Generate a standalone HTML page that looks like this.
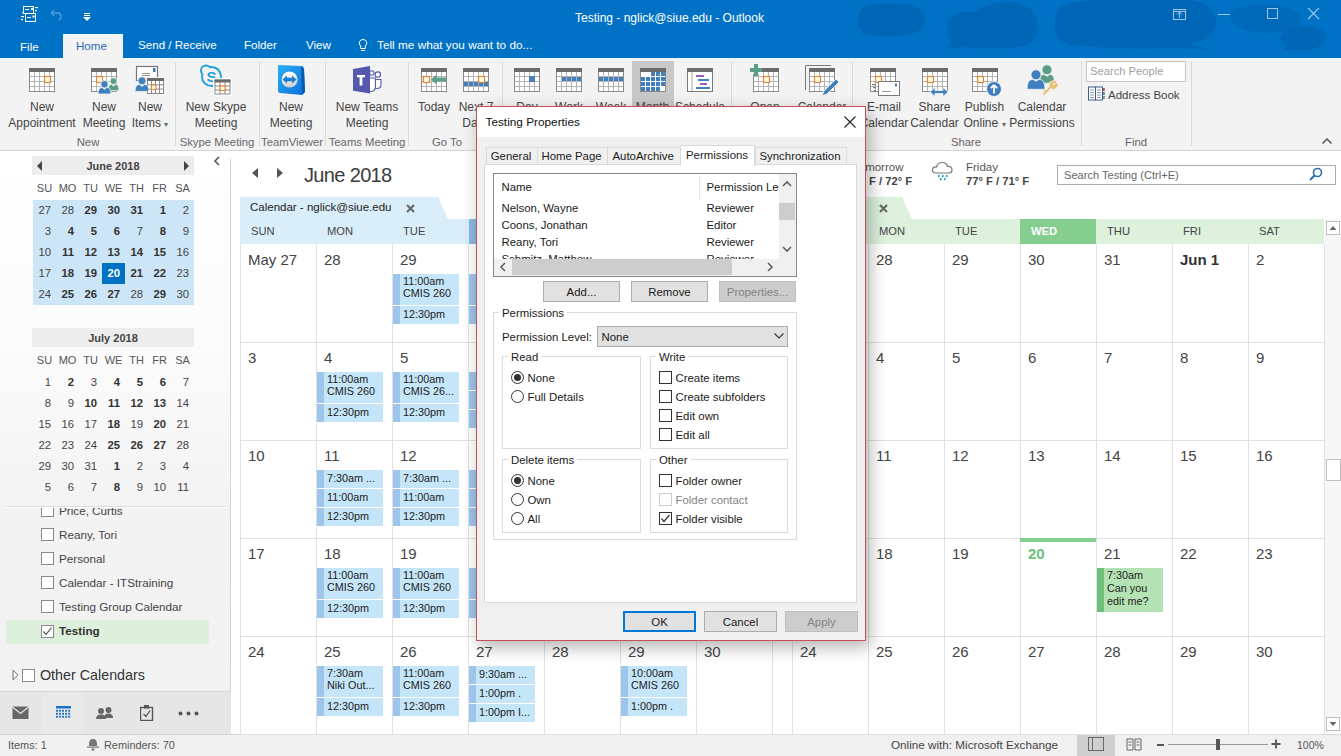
<!DOCTYPE html>
<html><head><meta charset="utf-8"><style>
html,body{margin:0;padding:0;}
body{width:1341px;height:756px;overflow:hidden;position:relative;font-family:"Liberation Sans", sans-serif;background:#fff;}
div{font-family:"Liberation Sans", sans-serif;}
</style></head><body>
<div style="position:absolute;left:0px;top:0px;width:1341px;height:58px;background:#0072C6"></div><svg style="position:absolute;left:850px;top:0px;" width="491" height="50" viewBox="0 0 491 50"><path d="M12 8 Q20 2 40 4 Q60 2 72 10 Q80 20 70 30 Q58 38 36 36 Q22 36 14 34 L10 37 L13 31 Q6 24 8 16 Z" fill="#0067B6"/><path d="M98 20 Q104 10 125 12 Q140 0 165 2 Q186 6 188 25 Q188 42 170 47 Q140 50 110 47 L96 49 L101 42 Q95 32 98 20 Z" fill="#0067B6"/><path d="M206 12 Q212 0 250 0 L340 0 Q368 4 366 26 Q362 40 340 44 L362 50 L325 48 Q280 50 230 46 Q206 44 204 30 Z" fill="#0067B6"/><path d="M380 12 Q392 4 410 6 Q430 2 446 12 Q456 22 444 30 Q420 36 396 30 Q378 24 380 12 Z" fill="#0067B6" opacity="0.8"/><path d="M432 34 Q440 24 456 26 Q474 26 476 38 Q474 48 456 50 L432 52 L436 46 Q428 42 432 34 Z" fill="#0067B6"/></svg><svg style="position:absolute;left:20px;top:5px;" width="18" height="18" viewBox="0 0 18 18"><g fill="none" stroke="#fff" stroke-width="1"><rect x="3.5" y="1.5" width="10" height="7"/><rect x="5.5" y="8.5" width="10" height="8" fill="#0072C6"/><line x1="5" y1="4.5" x2="9" y2="4.5"/><line x1="7" y1="12.5" x2="11" y2="12.5"/></g><rect x="11" y="3" width="2" height="2" fill="#fff"/><rect x="12.5" y="10.5" width="2" height="2" fill="#fff"/><rect x="15" y="2" width="3" height="1.2" fill="#fff"/><rect x="15" y="5" width="2" height="1.2" fill="#fff"/><rect x="1" y="11" width="3" height="1.2" fill="#fff"/><rect x="1" y="14" width="2" height="1.2" fill="#fff"/><rect x="2" y="7" width="1.2" height="1.2" fill="#fff"/></svg><svg style="position:absolute;left:50px;top:7px;" width="16" height="14" viewBox="0 0 16 14"><path d="M4 3 L1.5 6 L4 9 M1.5 6 H9 A4 4 0 0 1 9 13" fill="none" stroke="#4F9BDB" stroke-width="1.5"/></svg><svg style="position:absolute;left:82px;top:11px;" width="10" height="10" viewBox="0 0 10 10"><rect x="2" y="2" width="6" height="1" fill="#fff"/><rect x="2" y="4" width="6" height="1" fill="#fff"/><path d="M1 6 H9 L5 10 Z" fill="#fff"/></svg><div style="position:absolute;left:575px;top:9.5px;line-height:16px;font-size:12px;color:#fff;font-weight:normal;white-space:nowrap;">Testing - nglick@siue.edu - Outlook</div><svg style="position:absolute;left:1172px;top:8px;" width="16" height="14" viewBox="0 0 16 14"><rect x="1.5" y="1.5" width="12" height="10" fill="none" stroke="#9CC6EA"/><path d="M7.5 10 V4 M5 6.5 L7.5 4 L10 6.5" fill="none" stroke="#9CC6EA"/><line x1="1" y1="3.5" x2="14" y2="3.5" stroke="#9CC6EA"/></svg><svg style="position:absolute;left:1217px;top:13px;" width="14" height="3" viewBox="0 0 14 3"><line x1="1" y1="1.5" x2="13" y2="1.5" stroke="#9CC6EA"/></svg><svg style="position:absolute;left:1266px;top:7px;" width="14" height="14" viewBox="0 0 14 14"><rect x="1.5" y="1.5" width="10" height="10" fill="none" stroke="#9CC6EA"/></svg><svg style="position:absolute;left:1307px;top:7px;" width="14" height="14" viewBox="0 0 14 14"><path d="M1 1 L12 12 M12 1 L1 12" stroke="#9CC6EA" stroke-width="1.1"/></svg><div style="position:absolute;left:63px;top:34px;width:60px;height:24px;background:#F3F3F3"></div><div style="position:absolute;left:20px;top:39.1px;line-height:15px;font-size:11.6px;color:#fff;font-weight:normal;white-space:nowrap;">File</div><div style="position:absolute;left:76px;top:38.3px;line-height:15px;font-size:11.6px;color:#2B6BB5;font-weight:normal;white-space:nowrap;">Home</div><div style="position:absolute;left:138px;top:37.3px;line-height:15px;font-size:11.6px;color:#fff;font-weight:normal;white-space:nowrap;">Send / Receive</div><div style="position:absolute;left:244px;top:37.3px;line-height:15px;font-size:11.6px;color:#fff;font-weight:normal;white-space:nowrap;">Folder</div><div style="position:absolute;left:306px;top:37.3px;line-height:15px;font-size:11.6px;color:#fff;font-weight:normal;white-space:nowrap;">View</div><svg style="position:absolute;left:358px;top:38px;" width="10" height="15" viewBox="0 0 10 15"><path d="M5 1.5 A3.6 3.6 0 0 1 7.3 8 V10.5 H2.7 V8 A3.6 3.6 0 0 1 5 1.5 Z M3 12.5 H7" fill="none" stroke="#fff" stroke-width="1"/></svg><div style="position:absolute;left:377px;top:37.5px;line-height:15px;font-size:11.8px;color:#fff;font-weight:normal;white-space:nowrap;">Tell me what you want to do...</div><div style="position:absolute;left:0px;top:58px;width:1341px;height:92px;background:#F3F3F3"></div><div style="position:absolute;left:0px;top:150px;width:1341px;height:1px;background:#D4D4D4"></div><div style="position:absolute;left:175px;top:62px;width:1px;height:84px;background:#DADADA"></div><div style="position:absolute;left:259px;top:62px;width:1px;height:84px;background:#DADADA"></div><div style="position:absolute;left:325px;top:62px;width:1px;height:84px;background:#DADADA"></div><div style="position:absolute;left:408px;top:62px;width:1px;height:84px;background:#DADADA"></div><div style="position:absolute;left:502px;top:62px;width:1px;height:84px;background:#DADADA"></div><div style="position:absolute;left:731px;top:62px;width:1px;height:84px;background:#DADADA"></div><div style="position:absolute;left:852px;top:62px;width:1px;height:84px;background:#DADADA"></div><div style="position:absolute;left:1081px;top:62px;width:1px;height:84px;background:#DADADA"></div><div style="position:absolute;left:1191px;top:62px;width:1px;height:84px;background:#DADADA"></div><div style="position:absolute;left:632px;top:61px;width:42px;height:89px;background:#C8C8C8"></div><svg style="position:absolute;left:29px;top:68px;" width="38" height="34" viewBox="0 0 38 34"><rect x="0" y="0" width="26" height="24" fill="#8A8A8A"/><rect x="0" y="0" width="26" height="4" fill="#6B6B6B"/><rect x="1" y="4" width="24" height="19" fill="#B4B4B4"/><rect x="1" y="4" width="4" height="4" fill="#fff"/><rect x="1" y="9" width="4" height="4" fill="#fff"/><rect x="1" y="14" width="4" height="4" fill="#fff"/><rect x="1" y="19" width="4" height="4" fill="#fff"/><rect x="6" y="4" width="4" height="4" fill="#fff"/><rect x="6" y="9" width="4" height="4" fill="#fff"/><rect x="6" y="14" width="4" height="4" fill="#fff"/><rect x="6" y="19" width="4" height="4" fill="#fff"/><rect x="11" y="4" width="4" height="4" fill="#fff"/><rect x="11" y="9" width="4" height="4" fill="#fff"/><rect x="11" y="14" width="4" height="4" fill="#fff"/><rect x="11" y="19" width="4" height="4" fill="#fff"/><rect x="16" y="4" width="4" height="4" fill="#fff"/><rect x="16" y="9" width="4" height="4" fill="#fff"/><rect x="16" y="14" width="4" height="4" fill="#fff"/><rect x="16" y="19" width="4" height="4" fill="#fff"/><rect x="21" y="4" width="4" height="4" fill="#fff"/><rect x="21" y="9" width="4" height="4" fill="#fff"/><rect x="21" y="14" width="4" height="4" fill="#fff"/><rect x="21" y="19" width="4" height="4" fill="#fff"/><rect x="15.5" y="8.5" width="6" height="6" fill="#FFF8E0" stroke="#D98A3A" stroke-width="1.2"/></svg><div style="position:absolute;left:-18.0px;top:99.0px;width:120px;text-align:center;line-height:16px;font-size:12px;color:#444444;font-weight:normal;white-space:nowrap;">New</div><div style="position:absolute;left:-18.0px;top:114.5px;width:120px;text-align:center;line-height:16px;font-size:12px;color:#444444;font-weight:normal;white-space:nowrap;">Appointment</div><svg style="position:absolute;left:91px;top:68px;" width="38" height="34" viewBox="0 0 38 34"><rect x="0" y="0" width="26" height="24" fill="#8A8A8A"/><rect x="0" y="0" width="26" height="4" fill="#6B6B6B"/><rect x="1" y="4" width="24" height="19" fill="#B4B4B4"/><rect x="1" y="4" width="4" height="4" fill="#fff"/><rect x="1" y="9" width="4" height="4" fill="#fff"/><rect x="1" y="14" width="4" height="4" fill="#fff"/><rect x="1" y="19" width="4" height="4" fill="#fff"/><rect x="6" y="4" width="4" height="4" fill="#fff"/><rect x="6" y="9" width="4" height="4" fill="#fff"/><rect x="6" y="14" width="4" height="4" fill="#fff"/><rect x="6" y="19" width="4" height="4" fill="#fff"/><rect x="11" y="4" width="4" height="4" fill="#fff"/><rect x="11" y="9" width="4" height="4" fill="#fff"/><rect x="11" y="14" width="4" height="4" fill="#fff"/><rect x="11" y="19" width="4" height="4" fill="#fff"/><rect x="16" y="4" width="4" height="4" fill="#fff"/><rect x="16" y="9" width="4" height="4" fill="#fff"/><rect x="16" y="14" width="4" height="4" fill="#fff"/><rect x="16" y="19" width="4" height="4" fill="#fff"/><rect x="21" y="4" width="4" height="4" fill="#fff"/><rect x="21" y="9" width="4" height="4" fill="#fff"/><rect x="21" y="14" width="4" height="4" fill="#fff"/><rect x="21" y="19" width="4" height="4" fill="#fff"/><rect x="5.5" y="8.5" width="6" height="6" fill="#FFF8E0" stroke="#D98A3A" stroke-width="1.2"/></svg><svg style="position:absolute;left:85px;top:60px;" width="90" height="40" viewBox="0 0 90 40"><path d="M23.0 30.7 Q23.0 24.2 26.5 24.2 L28.5 26.2 L30.5 24.2 Q34.0 24.2 34.0 30.7 Z" fill="#5A9E84" stroke="#F3F3F3" stroke-width="0.8"/><circle cx="28.5" cy="21.1" r="3.4" fill="#5A9E84" stroke="#F3F3F3" stroke-width="0.8"/><path d="M13.0 34.0 Q13.0 27.5 17.3 27.5 L19.5 29.5 L21.7 27.5 Q26.0 27.5 26.0 34.0 Z" fill="#3F7FBF" stroke="#F3F3F3" stroke-width="0.8"/><circle cx="19.5" cy="24.2" r="3.7" fill="#3F7FBF" stroke="#F3F3F3" stroke-width="0.8"/><rect x="51.5" y="6.5" width="21" height="14" fill="#fff" stroke="#777" stroke-width="1.2"/><rect x="68" y="8" width="2.5" height="4" fill="#3F7FBF"/><line x1="57" y1="13.5" x2="65" y2="13.5" stroke="#999"/><line x1="57" y1="15.5" x2="65" y2="15.5" stroke="#999"/><rect x="61" y="17" width="19" height="18" fill="#F3F3F3"/><rect x="62" y="18" width="17" height="16" fill="#8A8A8A"/><rect x="62" y="18" width="17" height="3" fill="#6B6B6B"/><rect x="63" y="21.0" width="3" height="3.3" fill="#fff"/><rect x="63" y="25.3" width="3" height="3.3" fill="#fff"/><rect x="63" y="29.6" width="3" height="3.3" fill="#fff"/><rect x="67" y="21.0" width="3" height="3.3" fill="#fff"/><rect x="67" y="25.3" width="3" height="3.3" fill="#fff"/><rect x="67" y="29.6" width="3" height="3.3" fill="#fff"/><rect x="71" y="21.0" width="3" height="3.3" fill="#fff"/><rect x="71" y="25.3" width="3" height="3.3" fill="#fff"/><rect x="71" y="29.6" width="3" height="3.3" fill="#fff"/><rect x="75" y="21.0" width="3" height="3.3" fill="#fff"/><rect x="75" y="25.3" width="3" height="3.3" fill="#fff"/><rect x="75" y="29.6" width="3" height="3.3" fill="#fff"/><rect x="66.5" y="25" width="4.5" height="4.5" fill="#FFF8E0" stroke="#D98A3A" stroke-width="1.1"/><path d="M50.0 31.4 Q50.0 24.4 54.6 24.4 L57.0 26.4 L59.4 24.4 Q64.0 24.4 64.0 31.4 Z" fill="#3F7FBF" stroke="#F3F3F3" stroke-width="0.8"/><circle cx="57.0" cy="20.8" r="4.0" fill="#3F7FBF" stroke="#F3F3F3" stroke-width="0.8"/></svg><div style="position:absolute;left:44.0px;top:99.0px;width:120px;text-align:center;line-height:16px;font-size:12px;color:#444444;font-weight:normal;white-space:nowrap;">New</div><div style="position:absolute;left:44.0px;top:114.5px;width:120px;text-align:center;line-height:16px;font-size:12px;color:#444444;font-weight:normal;white-space:nowrap;">Meeting</div><div style="position:absolute;left:90.0px;top:99.0px;width:120px;text-align:center;line-height:16px;font-size:12px;color:#444444;font-weight:normal;white-space:nowrap;">New</div><div style="position:absolute;left:90.0px;top:114.5px;width:120px;text-align:center;line-height:16px;font-size:12px;color:#444444;font-weight:normal;white-space:nowrap;">Items <span style="font-size:8px;color:#666">&#9662;</span></div><svg style="position:absolute;left:199px;top:64px;" width="34" height="32" viewBox="0 0 34 32"><defs><linearGradient id="tvg" x1="0" y1="0" x2="0" y2="1"><stop offset="0" stop-color="#fff"/><stop offset="1" stop-color="#D0D0D0"/></linearGradient></defs><circle cx="12.5" cy="12.5" r="10.5" fill="#1DA1DB"/><circle cx="7" cy="6.5" r="6" fill="#1DA1DB"/><circle cx="18" cy="18.5" r="6" fill="#1DA1DB"/><circle cx="12.5" cy="12.5" r="8.6" fill="#F3F3F3"/><circle cx="7" cy="6.5" r="4.1" fill="#F3F3F3"/><circle cx="18" cy="18.5" r="4.1" fill="#F3F3F3"/><text x="12.5" y="18" font-family="Liberation Sans" font-weight="bold" font-size="15" fill="#1DA1DB" text-anchor="middle">S</text><rect x="14" y="14" width="19" height="18" fill="#fff"/><rect x="15.5" y="15.5" width="16" height="15" fill="#8A8A8A"/><rect x="15.5" y="15.5" width="16" height="3" fill="#6B6B6B"/><rect x="16.5" y="18.5" width="4" height="3" fill="#fff"/><rect x="16.5" y="22.5" width="4" height="3" fill="#fff"/><rect x="16.5" y="26.5" width="4" height="3" fill="#fff"/><rect x="21.5" y="18.5" width="4" height="3" fill="#fff"/><rect x="21.5" y="22.5" width="4" height="3" fill="#fff"/><rect x="21.5" y="26.5" width="4" height="3" fill="#fff"/><rect x="26.5" y="18.5" width="4" height="3" fill="#fff"/><rect x="26.5" y="22.5" width="4" height="3" fill="#fff"/><rect x="26.5" y="26.5" width="4" height="3" fill="#fff"/><rect x="21" y="22" width="5" height="4.5" fill="#FFF8E0" stroke="#D98A3A" stroke-width="1.1"/></svg><div style="position:absolute;left:156.0px;top:99.0px;width:120px;text-align:center;line-height:16px;font-size:12px;color:#444444;font-weight:normal;white-space:nowrap;">New Skype</div><div style="position:absolute;left:156.0px;top:114.5px;width:120px;text-align:center;line-height:16px;font-size:12px;color:#444444;font-weight:normal;white-space:nowrap;">Meeting</div><svg style="position:absolute;left:277px;top:64px;" width="30" height="33" viewBox="0 0 30 33"><defs><linearGradient id="tvb" x1="0" y1="0" x2="1" y2="1"><stop offset="0" stop-color="#2BB0F5"/><stop offset="1" stop-color="#0A6FD8"/></linearGradient><linearGradient id="tvc" x1="0" y1="0" x2="0" y2="1"><stop offset="0" stop-color="#fff"/><stop offset="1" stop-color="#CFCFCF"/></linearGradient></defs><path d="M1 1 L24 2 Q27 2 27 5 L28 28 L25 31 L3 29 Q1 29 1 26 Z" fill="url(#tvb)"/><path d="M24 2 L27 5 L28 28 L25 31 Z" fill="#0A58B5"/><circle cx="12.5" cy="15.5" r="9" fill="#1A8FE8"/><circle cx="12.5" cy="15.5" r="8" fill="url(#tvc)"/><path d="M5.5 15.5 L10 11.5 V13.8 H15 V11.5 L19.5 15.5 L15 19.5 V17.2 H10 V19.5 Z" fill="#1A7FD8"/></svg><div style="position:absolute;left:231.0px;top:99.0px;width:120px;text-align:center;line-height:16px;font-size:12px;color:#444444;font-weight:normal;white-space:nowrap;">New</div><div style="position:absolute;left:231.0px;top:114.5px;width:120px;text-align:center;line-height:16px;font-size:12px;color:#444444;font-weight:normal;white-space:nowrap;">Meeting</div><svg style="position:absolute;left:352px;top:64px;" width="32" height="32" viewBox="0 0 32 32"><circle cx="19.8" cy="9" r="2.2" fill="#fff" stroke="#5558AF" stroke-width="1.1"/><circle cx="25.8" cy="10.6" r="2.7" fill="#fff" stroke="#5558AF" stroke-width="1.1"/><path d="M23 15.5 H29 V20.5 Q29 24.5 25 24.5 Q23 24.5 22 23.5 Z" fill="#fff" stroke="#5558AF" stroke-width="1.1"/><path d="M17 14 H23.5 V22 Q23.5 27.5 18.5 27.5 H17 Z" fill="#fff" stroke="#5558AF" stroke-width="1.1"/><path d="M1 5 L18 2 V29.6 L1 26.7 Z" fill="#5558AF"/><path d="M5 11 H13 V13.2 H10.4 V21.5 H7.6 V13.2 H5 Z" fill="#fff"/></svg><div style="position:absolute;left:307.0px;top:99.0px;width:120px;text-align:center;line-height:16px;font-size:12px;color:#444444;font-weight:normal;white-space:nowrap;">New Teams</div><div style="position:absolute;left:307.0px;top:114.5px;width:120px;text-align:center;line-height:16px;font-size:12px;color:#444444;font-weight:normal;white-space:nowrap;">Meeting</div><svg style="position:absolute;left:421px;top:68px;" width="38" height="34" viewBox="0 0 38 34"><rect x="0" y="0" width="26" height="24" fill="#8A8A8A"/><rect x="0" y="0" width="26" height="4" fill="#6B6B6B"/><rect x="1" y="4" width="24" height="19" fill="#B4B4B4"/><rect x="1" y="4" width="4" height="4" fill="#fff"/><rect x="1" y="9" width="4" height="4" fill="#fff"/><rect x="1" y="14" width="4" height="4" fill="#fff"/><rect x="1" y="19" width="4" height="4" fill="#fff"/><rect x="6" y="4" width="4" height="4" fill="#fff"/><rect x="6" y="9" width="4" height="4" fill="#fff"/><rect x="6" y="14" width="4" height="4" fill="#fff"/><rect x="6" y="19" width="4" height="4" fill="#fff"/><rect x="11" y="4" width="4" height="4" fill="#fff"/><rect x="11" y="9" width="4" height="4" fill="#fff"/><rect x="11" y="14" width="4" height="4" fill="#fff"/><rect x="11" y="19" width="4" height="4" fill="#fff"/><rect x="16" y="4" width="4" height="4" fill="#fff"/><rect x="16" y="9" width="4" height="4" fill="#fff"/><rect x="16" y="14" width="4" height="4" fill="#fff"/><rect x="16" y="19" width="4" height="4" fill="#fff"/><rect x="21" y="4" width="4" height="4" fill="#fff"/><rect x="21" y="9" width="4" height="4" fill="#fff"/><rect x="21" y="14" width="4" height="4" fill="#fff"/><rect x="21" y="19" width="4" height="4" fill="#fff"/><rect x="2.5" y="8.5" width="6" height="6" fill="#FFF8E0" stroke="#D98A3A" stroke-width="1.2"/><path d="M10 11.5 L15.5 6.5 V9.5 H25 V13.5 H15.5 V16.5 Z" fill="#5AA283"/></svg><div style="position:absolute;left:374.0px;top:99.0px;width:120px;text-align:center;line-height:16px;font-size:12px;color:#444444;font-weight:normal;white-space:nowrap;">Today</div><svg style="position:absolute;left:463px;top:68px;" width="38" height="34" viewBox="0 0 38 34"><rect x="0" y="0" width="26" height="24" fill="#8A8A8A"/><rect x="0" y="0" width="26" height="4" fill="#6B6B6B"/><rect x="1" y="4" width="24" height="19" fill="#B4B4B4"/><rect x="1" y="4" width="4" height="4" fill="#fff"/><rect x="1" y="9" width="4" height="4" fill="#fff"/><rect x="1" y="14" width="4" height="4" fill="#fff"/><rect x="1" y="19" width="4" height="4" fill="#fff"/><rect x="6" y="4" width="4" height="4" fill="#fff"/><rect x="6" y="9" width="4" height="4" fill="#fff"/><rect x="6" y="14" width="4" height="4" fill="#fff"/><rect x="6" y="19" width="4" height="4" fill="#fff"/><rect x="11" y="4" width="4" height="4" fill="#fff"/><rect x="11" y="9" width="4" height="4" fill="#fff"/><rect x="11" y="14" width="4" height="4" fill="#fff"/><rect x="11" y="19" width="4" height="4" fill="#fff"/><rect x="16" y="4" width="4" height="4" fill="#fff"/><rect x="16" y="9" width="4" height="4" fill="#fff"/><rect x="16" y="14" width="4" height="4" fill="#fff"/><rect x="16" y="19" width="4" height="4" fill="#fff"/><rect x="21" y="4" width="4" height="4" fill="#fff"/><rect x="21" y="9" width="4" height="4" fill="#fff"/><rect x="21" y="14" width="4" height="4" fill="#fff"/><rect x="21" y="19" width="4" height="4" fill="#fff"/><rect x="1" y="14" width="4" height="4" fill="#3F7FBF"/><rect x="6" y="14" width="4" height="4" fill="#3F7FBF"/><rect x="11" y="14" width="4" height="4" fill="#3F7FBF"/><rect x="16" y="14" width="4" height="4" fill="#3F7FBF"/><rect x="21" y="14" width="4" height="4" fill="#3F7FBF"/><rect x="15.5" y="8.5" width="6" height="6" fill="#FFF8E0" stroke="#D98A3A" stroke-width="1.2"/></svg><div style="position:absolute;left:416.0px;top:99.0px;width:120px;text-align:center;line-height:16px;font-size:12px;color:#444444;font-weight:normal;white-space:nowrap;">Next 7</div><div style="position:absolute;left:416.0px;top:114.5px;width:120px;text-align:center;line-height:16px;font-size:12px;color:#444444;font-weight:normal;white-space:nowrap;">Days</div><svg style="position:absolute;left:514px;top:68px;" width="38" height="34" viewBox="0 0 38 34"><rect x="0" y="0" width="26" height="24" fill="#8A8A8A"/><rect x="0" y="0" width="26" height="4" fill="#6B6B6B"/><rect x="1" y="4" width="24" height="19" fill="#B4B4B4"/><rect x="1" y="4" width="4" height="4" fill="#fff"/><rect x="1" y="9" width="4" height="4" fill="#fff"/><rect x="1" y="14" width="4" height="4" fill="#fff"/><rect x="1" y="19" width="4" height="4" fill="#fff"/><rect x="6" y="4" width="4" height="4" fill="#fff"/><rect x="6" y="9" width="4" height="4" fill="#fff"/><rect x="6" y="14" width="4" height="4" fill="#fff"/><rect x="6" y="19" width="4" height="4" fill="#fff"/><rect x="11" y="4" width="4" height="4" fill="#fff"/><rect x="11" y="9" width="4" height="4" fill="#fff"/><rect x="11" y="14" width="4" height="4" fill="#fff"/><rect x="11" y="19" width="4" height="4" fill="#fff"/><rect x="16" y="4" width="4" height="4" fill="#fff"/><rect x="16" y="9" width="4" height="4" fill="#fff"/><rect x="16" y="14" width="4" height="4" fill="#fff"/><rect x="16" y="19" width="4" height="4" fill="#fff"/><rect x="21" y="4" width="4" height="4" fill="#fff"/><rect x="21" y="9" width="4" height="4" fill="#fff"/><rect x="21" y="14" width="4" height="4" fill="#fff"/><rect x="21" y="19" width="4" height="4" fill="#fff"/><rect x="15" y="8" width="6" height="6" fill="#4A7EBB"/></svg><div style="position:absolute;left:467.0px;top:99.0px;width:120px;text-align:center;line-height:16px;font-size:12px;color:#444444;font-weight:normal;white-space:nowrap;">Day</div><div style="position:absolute;left:467.0px;top:114.5px;width:120px;text-align:center;line-height:16px;font-size:12px;color:#444444;font-weight:normal;white-space:nowrap;">View</div><svg style="position:absolute;left:556px;top:68px;" width="38" height="34" viewBox="0 0 38 34"><rect x="0" y="0" width="26" height="24" fill="#8A8A8A"/><rect x="0" y="0" width="26" height="4" fill="#6B6B6B"/><rect x="1" y="4" width="24" height="19" fill="#B4B4B4"/><rect x="1" y="4" width="4" height="4" fill="#fff"/><rect x="1" y="9" width="4" height="4" fill="#fff"/><rect x="1" y="14" width="4" height="4" fill="#fff"/><rect x="1" y="19" width="4" height="4" fill="#fff"/><rect x="6" y="4" width="4" height="4" fill="#fff"/><rect x="6" y="9" width="4" height="4" fill="#fff"/><rect x="6" y="14" width="4" height="4" fill="#fff"/><rect x="6" y="19" width="4" height="4" fill="#fff"/><rect x="11" y="4" width="4" height="4" fill="#fff"/><rect x="11" y="9" width="4" height="4" fill="#fff"/><rect x="11" y="14" width="4" height="4" fill="#fff"/><rect x="11" y="19" width="4" height="4" fill="#fff"/><rect x="16" y="4" width="4" height="4" fill="#fff"/><rect x="16" y="9" width="4" height="4" fill="#fff"/><rect x="16" y="14" width="4" height="4" fill="#fff"/><rect x="16" y="19" width="4" height="4" fill="#fff"/><rect x="21" y="4" width="4" height="4" fill="#fff"/><rect x="21" y="9" width="4" height="4" fill="#fff"/><rect x="21" y="14" width="4" height="4" fill="#fff"/><rect x="21" y="19" width="4" height="4" fill="#fff"/><rect x="6" y="9" width="4" height="4" fill="#3F7FBF"/><rect x="11" y="9" width="4" height="4" fill="#3F7FBF"/><rect x="16" y="9" width="4" height="4" fill="#3F7FBF"/><rect x="21" y="9" width="4" height="4" fill="#3F7FBF"/></svg><div style="position:absolute;left:509.0px;top:99.0px;width:120px;text-align:center;line-height:16px;font-size:12px;color:#444444;font-weight:normal;white-space:nowrap;">Work</div><div style="position:absolute;left:509.0px;top:114.5px;width:120px;text-align:center;line-height:16px;font-size:12px;color:#444444;font-weight:normal;white-space:nowrap;">Week</div><svg style="position:absolute;left:598px;top:68px;" width="38" height="34" viewBox="0 0 38 34"><rect x="0" y="0" width="26" height="24" fill="#8A8A8A"/><rect x="0" y="0" width="26" height="4" fill="#6B6B6B"/><rect x="1" y="4" width="24" height="19" fill="#B4B4B4"/><rect x="1" y="4" width="4" height="4" fill="#fff"/><rect x="1" y="9" width="4" height="4" fill="#fff"/><rect x="1" y="14" width="4" height="4" fill="#fff"/><rect x="1" y="19" width="4" height="4" fill="#fff"/><rect x="6" y="4" width="4" height="4" fill="#fff"/><rect x="6" y="9" width="4" height="4" fill="#fff"/><rect x="6" y="14" width="4" height="4" fill="#fff"/><rect x="6" y="19" width="4" height="4" fill="#fff"/><rect x="11" y="4" width="4" height="4" fill="#fff"/><rect x="11" y="9" width="4" height="4" fill="#fff"/><rect x="11" y="14" width="4" height="4" fill="#fff"/><rect x="11" y="19" width="4" height="4" fill="#fff"/><rect x="16" y="4" width="4" height="4" fill="#fff"/><rect x="16" y="9" width="4" height="4" fill="#fff"/><rect x="16" y="14" width="4" height="4" fill="#fff"/><rect x="16" y="19" width="4" height="4" fill="#fff"/><rect x="21" y="4" width="4" height="4" fill="#fff"/><rect x="21" y="9" width="4" height="4" fill="#fff"/><rect x="21" y="14" width="4" height="4" fill="#fff"/><rect x="21" y="19" width="4" height="4" fill="#fff"/><rect x="1" y="9" width="4" height="4" fill="#3F7FBF"/><rect x="6" y="9" width="4" height="4" fill="#3F7FBF"/><rect x="11" y="9" width="4" height="4" fill="#3F7FBF"/><rect x="16" y="9" width="4" height="4" fill="#3F7FBF"/><rect x="21" y="9" width="4" height="4" fill="#3F7FBF"/></svg><div style="position:absolute;left:551.0px;top:99.0px;width:120px;text-align:center;line-height:16px;font-size:12px;color:#444444;font-weight:normal;white-space:nowrap;">Week</div><div style="position:absolute;left:551.0px;top:114.5px;width:120px;text-align:center;line-height:16px;font-size:12px;color:#444444;font-weight:normal;white-space:nowrap;">View</div><svg style="position:absolute;left:640px;top:68px;" width="38" height="34" viewBox="0 0 38 34"><rect x="0" y="0" width="26" height="24" fill="#8A8A8A"/><rect x="0" y="0" width="26" height="4" fill="#6B6B6B"/><rect x="1" y="4" width="24" height="19" fill="#B4B4B4"/><rect x="1" y="4" width="4" height="4" fill="#fff"/><rect x="1" y="9" width="4" height="4" fill="#fff"/><rect x="1" y="14" width="4" height="4" fill="#fff"/><rect x="1" y="19" width="4" height="4" fill="#fff"/><rect x="6" y="4" width="4" height="4" fill="#fff"/><rect x="6" y="9" width="4" height="4" fill="#fff"/><rect x="6" y="14" width="4" height="4" fill="#fff"/><rect x="6" y="19" width="4" height="4" fill="#fff"/><rect x="11" y="4" width="4" height="4" fill="#fff"/><rect x="11" y="9" width="4" height="4" fill="#fff"/><rect x="11" y="14" width="4" height="4" fill="#fff"/><rect x="11" y="19" width="4" height="4" fill="#fff"/><rect x="16" y="4" width="4" height="4" fill="#fff"/><rect x="16" y="9" width="4" height="4" fill="#fff"/><rect x="16" y="14" width="4" height="4" fill="#fff"/><rect x="16" y="19" width="4" height="4" fill="#fff"/><rect x="21" y="4" width="4" height="4" fill="#fff"/><rect x="21" y="9" width="4" height="4" fill="#fff"/><rect x="21" y="14" width="4" height="4" fill="#fff"/><rect x="21" y="19" width="4" height="4" fill="#fff"/><rect x="1" y="4" width="24" height="19" fill="#fff"/><rect x="1" y="9" width="4" height="4" fill="#3F7FBF"/><rect x="1" y="14" width="4" height="4" fill="#3F7FBF"/><rect x="1" y="19" width="4" height="4" fill="#3F7FBF"/><rect x="6" y="9" width="4" height="4" fill="#3F7FBF"/><rect x="6" y="14" width="4" height="4" fill="#3F7FBF"/><rect x="6" y="19" width="4" height="4" fill="#3F7FBF"/><rect x="11" y="4" width="4" height="4" fill="#3F7FBF"/><rect x="11" y="9" width="4" height="4" fill="#3F7FBF"/><rect x="11" y="14" width="4" height="4" fill="#3F7FBF"/><rect x="11" y="19" width="4" height="4" fill="#3F7FBF"/><rect x="16" y="4" width="4" height="4" fill="#3F7FBF"/><rect x="16" y="9" width="4" height="4" fill="#3F7FBF"/><rect x="16" y="14" width="4" height="4" fill="#3F7FBF"/><rect x="16" y="19" width="4" height="4" fill="#3F7FBF"/><rect x="21" y="4" width="4" height="4" fill="#3F7FBF"/><rect x="21" y="9" width="4" height="4" fill="#3F7FBF"/><rect x="21" y="14" width="4" height="4" fill="#3F7FBF"/></svg><div style="position:absolute;left:592.5px;top:99.0px;width:120px;text-align:center;line-height:16px;font-size:12px;color:#444444;font-weight:normal;white-space:nowrap;">Month</div><div style="position:absolute;left:592.5px;top:114.5px;width:120px;text-align:center;line-height:16px;font-size:12px;color:#444444;font-weight:normal;white-space:nowrap;">View</div><svg style="position:absolute;left:687px;top:68px;" width="28" height="26" viewBox="0 0 28 26"><rect x="0.5" y="0.5" width="25" height="23" fill="#fff" stroke="#7A7A7A"/><rect x="0" y="0" width="26" height="4" fill="#6E6E6E"/><line x1="5" y1="4" x2="5" y2="23" stroke="#A6A6A6"/><rect x="9" y="7" width="8" height="2" fill="#9E5FB0"/><rect x="11" y="11" width="11" height="2" fill="#3F7FBF"/><rect x="13" y="15" width="7" height="2" fill="#9E5FB0"/><rect x="9" y="19" width="14" height="2" fill="#3F7FBF"/></svg><div style="position:absolute;left:640.0px;top:99.0px;width:120px;text-align:center;line-height:16px;font-size:12px;color:#444444;font-weight:normal;white-space:nowrap;">Schedule</div><div style="position:absolute;left:640.0px;top:114.5px;width:120px;text-align:center;line-height:16px;font-size:12px;color:#444444;font-weight:normal;white-space:nowrap;">View</div><svg style="position:absolute;left:753px;top:68px;" width="38" height="34" viewBox="0 0 38 34"><rect x="0" y="0" width="26" height="24" fill="#8A8A8A"/><rect x="0" y="0" width="26" height="4" fill="#6B6B6B"/><rect x="1" y="4" width="24" height="19" fill="#B4B4B4"/><rect x="1" y="4" width="4" height="4" fill="#fff"/><rect x="1" y="9" width="4" height="4" fill="#fff"/><rect x="1" y="14" width="4" height="4" fill="#fff"/><rect x="1" y="19" width="4" height="4" fill="#fff"/><rect x="6" y="4" width="4" height="4" fill="#fff"/><rect x="6" y="9" width="4" height="4" fill="#fff"/><rect x="6" y="14" width="4" height="4" fill="#fff"/><rect x="6" y="19" width="4" height="4" fill="#fff"/><rect x="11" y="4" width="4" height="4" fill="#fff"/><rect x="11" y="9" width="4" height="4" fill="#fff"/><rect x="11" y="14" width="4" height="4" fill="#fff"/><rect x="11" y="19" width="4" height="4" fill="#fff"/><rect x="16" y="4" width="4" height="4" fill="#fff"/><rect x="16" y="9" width="4" height="4" fill="#fff"/><rect x="16" y="14" width="4" height="4" fill="#fff"/><rect x="16" y="19" width="4" height="4" fill="#fff"/><rect x="21" y="4" width="4" height="4" fill="#fff"/><rect x="21" y="9" width="4" height="4" fill="#fff"/><rect x="21" y="14" width="4" height="4" fill="#fff"/><rect x="21" y="19" width="4" height="4" fill="#fff"/><rect x="10.5" y="8.5" width="6" height="6" fill="#FFF8E0" stroke="#D98A3A" stroke-width="1.2"/><rect x="-1" y="-1" width="8" height="7" fill="#F3F3F3"/></svg><svg style="position:absolute;left:750px;top:64px;" width="13" height="13" viewBox="0 0 13 13"><path d="M4 0 H8 V4 H12 V8 H8 V12 H4 V8 H0 V4 H4 Z" fill="#5A9E84"/></svg><div style="position:absolute;left:705.0px;top:99.0px;width:120px;text-align:center;line-height:16px;font-size:12px;color:#444444;font-weight:normal;white-space:nowrap;">Open</div><div style="position:absolute;left:705.0px;top:114.5px;width:120px;text-align:center;line-height:16px;font-size:12px;color:#444444;font-weight:normal;white-space:nowrap;">Calendar <span style="font-size:8px;color:#666">&#9662;</span></div><svg style="position:absolute;left:805px;top:65px;" width="36" height="33" viewBox="0 0 36 33"><path d="M0.5 25 V0.5 H26" fill="none" stroke="#7A7A7A" stroke-width="1"/><g transform="translate(4,3)"><rect x="0" y="0" width="26" height="24" fill="#8A8A8A"/><rect x="0" y="0" width="26" height="4" fill="#6B6B6B"/><rect x="1" y="4" width="24" height="19" fill="#B4B4B4"/><rect x="1" y="4" width="4" height="4" fill="#fff"/><rect x="1" y="9" width="4" height="4" fill="#fff"/><rect x="1" y="14" width="4" height="4" fill="#fff"/><rect x="1" y="19" width="4" height="4" fill="#fff"/><rect x="6" y="4" width="4" height="4" fill="#fff"/><rect x="6" y="9" width="4" height="4" fill="#fff"/><rect x="6" y="14" width="4" height="4" fill="#fff"/><rect x="6" y="19" width="4" height="4" fill="#fff"/><rect x="11" y="4" width="4" height="4" fill="#fff"/><rect x="11" y="9" width="4" height="4" fill="#fff"/><rect x="11" y="14" width="4" height="4" fill="#fff"/><rect x="11" y="19" width="4" height="4" fill="#fff"/><rect x="16" y="4" width="4" height="4" fill="#fff"/><rect x="16" y="9" width="4" height="4" fill="#fff"/><rect x="16" y="14" width="4" height="4" fill="#fff"/><rect x="16" y="19" width="4" height="4" fill="#fff"/><rect x="21" y="4" width="4" height="4" fill="#fff"/><rect x="21" y="9" width="4" height="4" fill="#fff"/><rect x="21" y="14" width="4" height="4" fill="#fff"/><rect x="21" y="19" width="4" height="4" fill="#fff"/><rect x="5.5" y="8.5" width="6" height="6" fill="#FFF8E0" stroke="#D98A3A" stroke-width="1.2"/></g><path d="M17 31 L19 26 L31 14 L34 17 L22 29 Z" fill="#3F7FBF" stroke="#F3F3F3" stroke-width="1"/></svg><div style="position:absolute;left:762.0px;top:99.0px;width:120px;text-align:center;line-height:16px;font-size:12px;color:#444444;font-weight:normal;white-space:nowrap;">Calendar</div><div style="position:absolute;left:762.0px;top:114.5px;width:120px;text-align:center;line-height:16px;font-size:12px;color:#444444;font-weight:normal;white-space:nowrap;">Groups <span style="font-size:8px;color:#666">&#9662;</span></div><svg style="position:absolute;left:870px;top:68px;" width="38" height="34" viewBox="0 0 38 34"><rect x="0" y="0" width="26" height="24" fill="#8A8A8A"/><rect x="0" y="0" width="26" height="4" fill="#6B6B6B"/><rect x="1" y="4" width="24" height="19" fill="#B4B4B4"/><rect x="1" y="4" width="4" height="4" fill="#fff"/><rect x="1" y="9" width="4" height="4" fill="#fff"/><rect x="1" y="14" width="4" height="4" fill="#fff"/><rect x="1" y="19" width="4" height="4" fill="#fff"/><rect x="6" y="4" width="4" height="4" fill="#fff"/><rect x="6" y="9" width="4" height="4" fill="#fff"/><rect x="6" y="14" width="4" height="4" fill="#fff"/><rect x="6" y="19" width="4" height="4" fill="#fff"/><rect x="11" y="4" width="4" height="4" fill="#fff"/><rect x="11" y="9" width="4" height="4" fill="#fff"/><rect x="11" y="14" width="4" height="4" fill="#fff"/><rect x="11" y="19" width="4" height="4" fill="#fff"/><rect x="16" y="4" width="4" height="4" fill="#fff"/><rect x="16" y="9" width="4" height="4" fill="#fff"/><rect x="16" y="14" width="4" height="4" fill="#fff"/><rect x="16" y="19" width="4" height="4" fill="#fff"/><rect x="21" y="4" width="4" height="4" fill="#fff"/><rect x="21" y="9" width="4" height="4" fill="#fff"/><rect x="21" y="14" width="4" height="4" fill="#fff"/><rect x="21" y="19" width="4" height="4" fill="#fff"/><rect x="5.5" y="8.5" width="6" height="6" fill="#FFF8E0" stroke="#D98A3A" stroke-width="1.2"/><rect x="8" y="13" width="23" height="16" fill="#F3F3F3"/><rect x="8.5" y="13.5" width="21" height="14" fill="#fff" stroke="#7A7A7A"/><rect x="25" y="15.5" width="2" height="3" fill="#3F7FBF"/><line x1="12" y1="23.5" x2="21" y2="23.5" stroke="#999"/><rect x="2" y="16" width="4" height="1.2" fill="#777"/><rect x="3" y="19" width="3" height="1.2" fill="#777"/><rect x="4" y="22" width="2" height="1.2" fill="#777"/></svg><div style="position:absolute;left:824.0px;top:99.0px;width:120px;text-align:center;line-height:16px;font-size:12px;color:#444444;font-weight:normal;white-space:nowrap;">E-mail</div><div style="position:absolute;left:824.0px;top:114.5px;width:120px;text-align:center;line-height:16px;font-size:12px;color:#444444;font-weight:normal;white-space:nowrap;">Calendar</div><svg style="position:absolute;left:922px;top:68px;" width="38" height="34" viewBox="0 0 38 34"><rect x="0" y="0" width="26" height="24" fill="#8A8A8A"/><rect x="0" y="0" width="26" height="4" fill="#6B6B6B"/><rect x="1" y="4" width="24" height="19" fill="#B4B4B4"/><rect x="1" y="4" width="4" height="4" fill="#fff"/><rect x="1" y="9" width="4" height="4" fill="#fff"/><rect x="1" y="14" width="4" height="4" fill="#fff"/><rect x="1" y="19" width="4" height="4" fill="#fff"/><rect x="6" y="4" width="4" height="4" fill="#fff"/><rect x="6" y="9" width="4" height="4" fill="#fff"/><rect x="6" y="14" width="4" height="4" fill="#fff"/><rect x="6" y="19" width="4" height="4" fill="#fff"/><rect x="11" y="4" width="4" height="4" fill="#fff"/><rect x="11" y="9" width="4" height="4" fill="#fff"/><rect x="11" y="14" width="4" height="4" fill="#fff"/><rect x="11" y="19" width="4" height="4" fill="#fff"/><rect x="16" y="4" width="4" height="4" fill="#fff"/><rect x="16" y="9" width="4" height="4" fill="#fff"/><rect x="16" y="14" width="4" height="4" fill="#fff"/><rect x="16" y="19" width="4" height="4" fill="#fff"/><rect x="21" y="4" width="4" height="4" fill="#fff"/><rect x="21" y="9" width="4" height="4" fill="#fff"/><rect x="21" y="14" width="4" height="4" fill="#fff"/><rect x="21" y="19" width="4" height="4" fill="#fff"/><rect x="5.5" y="8.5" width="6" height="6" fill="#FFF8E0" stroke="#D98A3A" stroke-width="1.2"/><path d="M8 24 L13 19.5 V22.5 H21 V19.5 L26 24 L21 28.5 V25.5 H13 V28.5 Z" fill="#3F7FBF" stroke="#F3F3F3" stroke-width="0.8"/></svg><div style="position:absolute;left:874.5px;top:99.0px;width:120px;text-align:center;line-height:16px;font-size:12px;color:#444444;font-weight:normal;white-space:nowrap;">Share</div><div style="position:absolute;left:874.5px;top:114.5px;width:120px;text-align:center;line-height:16px;font-size:12px;color:#444444;font-weight:normal;white-space:nowrap;">Calendar</div><svg style="position:absolute;left:972px;top:68px;" width="38" height="34" viewBox="0 0 38 34"><rect x="0" y="0" width="26" height="24" fill="#8A8A8A"/><rect x="0" y="0" width="26" height="4" fill="#6B6B6B"/><rect x="1" y="4" width="24" height="19" fill="#B4B4B4"/><rect x="1" y="4" width="4" height="4" fill="#fff"/><rect x="1" y="9" width="4" height="4" fill="#fff"/><rect x="1" y="14" width="4" height="4" fill="#fff"/><rect x="1" y="19" width="4" height="4" fill="#fff"/><rect x="6" y="4" width="4" height="4" fill="#fff"/><rect x="6" y="9" width="4" height="4" fill="#fff"/><rect x="6" y="14" width="4" height="4" fill="#fff"/><rect x="6" y="19" width="4" height="4" fill="#fff"/><rect x="11" y="4" width="4" height="4" fill="#fff"/><rect x="11" y="9" width="4" height="4" fill="#fff"/><rect x="11" y="14" width="4" height="4" fill="#fff"/><rect x="11" y="19" width="4" height="4" fill="#fff"/><rect x="16" y="4" width="4" height="4" fill="#fff"/><rect x="16" y="9" width="4" height="4" fill="#fff"/><rect x="16" y="14" width="4" height="4" fill="#fff"/><rect x="16" y="19" width="4" height="4" fill="#fff"/><rect x="21" y="4" width="4" height="4" fill="#fff"/><rect x="21" y="9" width="4" height="4" fill="#fff"/><rect x="21" y="14" width="4" height="4" fill="#fff"/><rect x="21" y="19" width="4" height="4" fill="#fff"/><rect x="5.5" y="8.5" width="6" height="6" fill="#FFF8E0" stroke="#D98A3A" stroke-width="1.2"/><circle cx="22" cy="21" r="7.5" fill="#3F7FBF" stroke="#F3F3F3" stroke-width="1"/><path d="M22 17 L18.8 20.2 M22 17 L25.2 20.2 M22 17 V25.5" stroke="#fff" stroke-width="1.8" fill="none"/></svg><div style="position:absolute;left:924.5px;top:99.0px;width:120px;text-align:center;line-height:16px;font-size:12px;color:#444444;font-weight:normal;white-space:nowrap;">Publish</div><div style="position:absolute;left:924.5px;top:114.5px;width:120px;text-align:center;line-height:16px;font-size:12px;color:#444444;font-weight:normal;white-space:nowrap;">Online <span style="font-size:8px;color:#666">&#9662;</span></div><svg style="position:absolute;left:1020px;top:60px;" width="45" height="40" viewBox="0 0 45 40"><path d="M19.5 23.3 Q19.5 14.3 24.0 14.3 L27.0 16.3 L30.0 14.3 Q34.5 14.3 34.5 23.3 Z" fill="#5A9E84" stroke="#F3F3F3" stroke-width="0.8"/><circle cx="27.0" cy="9.8" r="5.0" fill="#5A9E84" stroke="#F3F3F3" stroke-width="0.8"/><path d="M7.0 29.3 Q7.0 19.3 13.0 19.3 L16.0 21.3 L19.0 19.3 Q25.0 19.3 25.0 29.3 Z" fill="#3F7FBF" stroke="#F3F3F3" stroke-width="0.8"/><circle cx="16.0" cy="14.8" r="5.0" fill="#3F7FBF" stroke="#F3F3F3" stroke-width="0.8"/><path d="M29.5 22 L35 20 L38.5 25.5 L34 30 L31 28.5 L24 35.5 L22.5 33.5 L24.5 31.5 L23.5 30.5 L25 29 L26 30 L29 27 Z" fill="#E9C172" stroke="#F3F3F3" stroke-width="0.8"/><circle cx="34" cy="24" r="1.1" fill="#fff"/></svg><div style="position:absolute;left:982.0px;top:99.0px;width:120px;text-align:center;line-height:16px;font-size:12px;color:#444444;font-weight:normal;white-space:nowrap;">Calendar</div><div style="position:absolute;left:982.0px;top:114.5px;width:120px;text-align:center;line-height:16px;font-size:12px;color:#444444;font-weight:normal;white-space:nowrap;">Permissions</div><div style="position:absolute;left:8.0px;top:134.5px;width:160px;text-align:center;line-height:15px;font-size:11.3px;color:#666666;font-weight:normal;white-space:nowrap;">New</div><div style="position:absolute;left:137.0px;top:134.5px;width:160px;text-align:center;line-height:15px;font-size:11.3px;color:#666666;font-weight:normal;white-space:nowrap;">Skype Meeting</div><div style="position:absolute;left:212.0px;top:134.5px;width:160px;text-align:center;line-height:15px;font-size:11.3px;color:#666666;font-weight:normal;white-space:nowrap;">TeamViewer</div><div style="position:absolute;left:287.0px;top:134.5px;width:160px;text-align:center;line-height:15px;font-size:11.3px;color:#666666;font-weight:normal;white-space:nowrap;">Teams Meeting</div><div style="position:absolute;left:367.0px;top:134.5px;width:160px;text-align:center;line-height:15px;font-size:11.3px;color:#666666;font-weight:normal;white-space:nowrap;">Go To</div><div style="position:absolute;left:536.0px;top:134.5px;width:160px;text-align:center;line-height:15px;font-size:11.3px;color:#666666;font-weight:normal;white-space:nowrap;">Arrange</div><div style="position:absolute;left:712.0px;top:134.5px;width:160px;text-align:center;line-height:15px;font-size:11.3px;color:#666666;font-weight:normal;white-space:nowrap;">Manage Calendars</div><div style="position:absolute;left:886.0px;top:134.5px;width:160px;text-align:center;line-height:15px;font-size:11.3px;color:#666666;font-weight:normal;white-space:nowrap;">Share</div><div style="position:absolute;left:1056.0px;top:134.5px;width:160px;text-align:center;line-height:15px;font-size:11.3px;color:#666666;font-weight:normal;white-space:nowrap;">Find</div><div style="position:absolute;left:1086px;top:61px;width:100px;height:21px;background:#fff;border:1px solid #C6C6C6;box-sizing:border-box"></div><div style="position:absolute;left:1090px;top:64.0px;line-height:15px;font-size:11.2px;color:#A0A0A0;font-weight:normal;white-space:nowrap;">Search People</div><svg style="position:absolute;left:1088px;top:86px;" width="18" height="16" viewBox="0 0 18 16"><rect x="0.5" y="1" width="7" height="13" fill="#fff" stroke="#3D5F86" stroke-width="1"/><rect x="7.5" y="1" width="7" height="13" fill="#fff" stroke="#3D5F86" stroke-width="1"/><line x1="2" y1="4" x2="6" y2="4" stroke="#888" stroke-width="0.9"/><line x1="2" y1="6.5" x2="6" y2="6.5" stroke="#888" stroke-width="0.9"/><line x1="2" y1="9" x2="6" y2="9" stroke="#888" stroke-width="0.9"/><line x1="2" y1="11.5" x2="6" y2="11.5" stroke="#888" stroke-width="0.9"/><line x1="9" y1="4" x2="13" y2="4" stroke="#888" stroke-width="0.9"/><line x1="9" y1="6.5" x2="13" y2="6.5" stroke="#888" stroke-width="0.9"/><line x1="9" y1="9" x2="13" y2="9" stroke="#888" stroke-width="0.9"/><line x1="9" y1="11.5" x2="13" y2="11.5" stroke="#888" stroke-width="0.9"/><rect x="15" y="2" width="1.8" height="3" fill="#C0504D"/><rect x="15" y="6" width="1.8" height="3" fill="#4F81BD"/><rect x="15" y="10" width="1.8" height="3" fill="#5A9E84"/></svg><div style="position:absolute;left:1108px;top:87.5px;line-height:15px;font-size:11.5px;color:#444444;font-weight:normal;white-space:nowrap;">Address Book</div><svg style="position:absolute;left:1321px;top:137px;" width="12" height="8" viewBox="0 0 12 8"><path d="M1.5 6.5 L6 2 L10.5 6.5" fill="none" stroke="#555" stroke-width="1.5"/></svg><div style="position:absolute;left:0px;top:151px;width:230px;height:540px;background:linear-gradient(#FFFFFF 0px, #FBFBFB 200px, #F3F3F3 360px, #F2F2F2 540px)"></div><div style="position:absolute;left:230px;top:159px;width:1px;height:532px;background:#D4D4D4"></div><svg style="position:absolute;left:212px;top:155px;" width="10" height="12" viewBox="0 0 10 12"><path d="M7 2 L3 6 L7 10" fill="none" stroke="#555" stroke-width="1.6"/></svg><div style="position:absolute;left:32px;top:156px;width:162px;height:19px;background:#EDEDED"></div><div style="position:absolute;left:53.0px;top:158.5px;width:120px;text-align:center;line-height:14px;font-size:11px;color:#444444;font-weight:bold;white-space:nowrap;">June 2018</div><svg style="position:absolute;left:36px;top:161px;" width="8" height="10" viewBox="0 0 8 10"><path d="M6 0 L1 5 L6 10 Z" fill="#444"/></svg><svg style="position:absolute;left:182px;top:161px;" width="8" height="10" viewBox="0 0 8 10"><path d="M2 0 L7 5 L2 10 Z" fill="#444"/></svg><div style="position:absolute;left:33.0px;top:181.0px;width:23px;text-align:center;line-height:14px;font-size:11px;color:#555;font-weight:normal;white-space:nowrap;">SU</div><div style="position:absolute;left:56.0px;top:181.0px;width:23px;text-align:center;line-height:14px;font-size:11px;color:#555;font-weight:normal;white-space:nowrap;">MO</div><div style="position:absolute;left:79.0px;top:181.0px;width:23px;text-align:center;line-height:14px;font-size:11px;color:#555;font-weight:normal;white-space:nowrap;">TU</div><div style="position:absolute;left:102.0px;top:181.0px;width:23px;text-align:center;line-height:14px;font-size:11px;color:#555;font-weight:normal;white-space:nowrap;">WE</div><div style="position:absolute;left:125.0px;top:181.0px;width:23px;text-align:center;line-height:14px;font-size:11px;color:#555;font-weight:normal;white-space:nowrap;">TH</div><div style="position:absolute;left:148.0px;top:181.0px;width:23px;text-align:center;line-height:14px;font-size:11px;color:#555;font-weight:normal;white-space:nowrap;">FR</div><div style="position:absolute;left:171.0px;top:181.0px;width:23px;text-align:center;line-height:14px;font-size:11px;color:#555;font-weight:normal;white-space:nowrap;">SA</div><div style="position:absolute;left:33px;top:200px;width:161px;height:105px;background:#CDE6F7"></div><div style="position:absolute;left:21.0px;top:203.0px;width:30px;text-align:right;line-height:15px;font-size:11.3px;color:#444;font-weight:normal;white-space:nowrap;">27</div><div style="position:absolute;left:44.0px;top:203.0px;width:30px;text-align:right;line-height:15px;font-size:11.3px;color:#444;font-weight:normal;white-space:nowrap;">28</div><div style="position:absolute;left:67.0px;top:203.0px;width:30px;text-align:right;line-height:15px;font-size:11.3px;color:#333;font-weight:bold;white-space:nowrap;">29</div><div style="position:absolute;left:90.0px;top:203.0px;width:30px;text-align:right;line-height:15px;font-size:11.3px;color:#333;font-weight:bold;white-space:nowrap;">30</div><div style="position:absolute;left:113.0px;top:203.0px;width:30px;text-align:right;line-height:15px;font-size:11.3px;color:#333;font-weight:bold;white-space:nowrap;">31</div><div style="position:absolute;left:136.0px;top:203.0px;width:30px;text-align:right;line-height:15px;font-size:11.3px;color:#333;font-weight:bold;white-space:nowrap;">1</div><div style="position:absolute;left:159.0px;top:203.0px;width:30px;text-align:right;line-height:15px;font-size:11.3px;color:#444;font-weight:normal;white-space:nowrap;">2</div><div style="position:absolute;left:21.0px;top:224.0px;width:30px;text-align:right;line-height:15px;font-size:11.3px;color:#444;font-weight:normal;white-space:nowrap;">3</div><div style="position:absolute;left:44.0px;top:224.0px;width:30px;text-align:right;line-height:15px;font-size:11.3px;color:#333;font-weight:bold;white-space:nowrap;">4</div><div style="position:absolute;left:67.0px;top:224.0px;width:30px;text-align:right;line-height:15px;font-size:11.3px;color:#333;font-weight:bold;white-space:nowrap;">5</div><div style="position:absolute;left:90.0px;top:224.0px;width:30px;text-align:right;line-height:15px;font-size:11.3px;color:#333;font-weight:bold;white-space:nowrap;">6</div><div style="position:absolute;left:113.0px;top:224.0px;width:30px;text-align:right;line-height:15px;font-size:11.3px;color:#444;font-weight:normal;white-space:nowrap;">7</div><div style="position:absolute;left:136.0px;top:224.0px;width:30px;text-align:right;line-height:15px;font-size:11.3px;color:#333;font-weight:bold;white-space:nowrap;">8</div><div style="position:absolute;left:159.0px;top:224.0px;width:30px;text-align:right;line-height:15px;font-size:11.3px;color:#444;font-weight:normal;white-space:nowrap;">9</div><div style="position:absolute;left:21.0px;top:245.0px;width:30px;text-align:right;line-height:15px;font-size:11.3px;color:#444;font-weight:normal;white-space:nowrap;">10</div><div style="position:absolute;left:44.0px;top:245.0px;width:30px;text-align:right;line-height:15px;font-size:11.3px;color:#333;font-weight:bold;white-space:nowrap;">11</div><div style="position:absolute;left:67.0px;top:245.0px;width:30px;text-align:right;line-height:15px;font-size:11.3px;color:#333;font-weight:bold;white-space:nowrap;">12</div><div style="position:absolute;left:90.0px;top:245.0px;width:30px;text-align:right;line-height:15px;font-size:11.3px;color:#333;font-weight:bold;white-space:nowrap;">13</div><div style="position:absolute;left:113.0px;top:245.0px;width:30px;text-align:right;line-height:15px;font-size:11.3px;color:#333;font-weight:bold;white-space:nowrap;">14</div><div style="position:absolute;left:136.0px;top:245.0px;width:30px;text-align:right;line-height:15px;font-size:11.3px;color:#333;font-weight:bold;white-space:nowrap;">15</div><div style="position:absolute;left:159.0px;top:245.0px;width:30px;text-align:right;line-height:15px;font-size:11.3px;color:#444;font-weight:normal;white-space:nowrap;">16</div><div style="position:absolute;left:21.0px;top:266.0px;width:30px;text-align:right;line-height:15px;font-size:11.3px;color:#444;font-weight:normal;white-space:nowrap;">17</div><div style="position:absolute;left:44.0px;top:266.0px;width:30px;text-align:right;line-height:15px;font-size:11.3px;color:#333;font-weight:bold;white-space:nowrap;">18</div><div style="position:absolute;left:67.0px;top:266.0px;width:30px;text-align:right;line-height:15px;font-size:11.3px;color:#333;font-weight:bold;white-space:nowrap;">19</div><div style="position:absolute;left:102px;top:263px;width:23px;height:21px;background:#0072C6"></div><div style="position:absolute;left:90.0px;top:266.0px;width:30px;text-align:right;line-height:15px;font-size:11.3px;color:#fff;font-weight:bold;white-space:nowrap;">20</div><div style="position:absolute;left:113.0px;top:266.0px;width:30px;text-align:right;line-height:15px;font-size:11.3px;color:#333;font-weight:bold;white-space:nowrap;">21</div><div style="position:absolute;left:136.0px;top:266.0px;width:30px;text-align:right;line-height:15px;font-size:11.3px;color:#333;font-weight:bold;white-space:nowrap;">22</div><div style="position:absolute;left:159.0px;top:266.0px;width:30px;text-align:right;line-height:15px;font-size:11.3px;color:#444;font-weight:normal;white-space:nowrap;">23</div><div style="position:absolute;left:21.0px;top:287.0px;width:30px;text-align:right;line-height:15px;font-size:11.3px;color:#444;font-weight:normal;white-space:nowrap;">24</div><div style="position:absolute;left:44.0px;top:287.0px;width:30px;text-align:right;line-height:15px;font-size:11.3px;color:#333;font-weight:bold;white-space:nowrap;">25</div><div style="position:absolute;left:67.0px;top:287.0px;width:30px;text-align:right;line-height:15px;font-size:11.3px;color:#333;font-weight:bold;white-space:nowrap;">26</div><div style="position:absolute;left:90.0px;top:287.0px;width:30px;text-align:right;line-height:15px;font-size:11.3px;color:#333;font-weight:bold;white-space:nowrap;">27</div><div style="position:absolute;left:113.0px;top:287.0px;width:30px;text-align:right;line-height:15px;font-size:11.3px;color:#444;font-weight:normal;white-space:nowrap;">28</div><div style="position:absolute;left:136.0px;top:287.0px;width:30px;text-align:right;line-height:15px;font-size:11.3px;color:#333;font-weight:bold;white-space:nowrap;">29</div><div style="position:absolute;left:159.0px;top:287.0px;width:30px;text-align:right;line-height:15px;font-size:11.3px;color:#444;font-weight:normal;white-space:nowrap;">30</div><div style="position:absolute;left:32px;top:328px;width:162px;height:19px;background:#EDEDED"></div><div style="position:absolute;left:53.0px;top:330.5px;width:120px;text-align:center;line-height:14px;font-size:11px;color:#444444;font-weight:bold;white-space:nowrap;">July 2018</div><div style="position:absolute;left:33.0px;top:353.0px;width:23px;text-align:center;line-height:14px;font-size:11px;color:#555;font-weight:normal;white-space:nowrap;">SU</div><div style="position:absolute;left:56.0px;top:353.0px;width:23px;text-align:center;line-height:14px;font-size:11px;color:#555;font-weight:normal;white-space:nowrap;">MO</div><div style="position:absolute;left:79.0px;top:353.0px;width:23px;text-align:center;line-height:14px;font-size:11px;color:#555;font-weight:normal;white-space:nowrap;">TU</div><div style="position:absolute;left:102.0px;top:353.0px;width:23px;text-align:center;line-height:14px;font-size:11px;color:#555;font-weight:normal;white-space:nowrap;">WE</div><div style="position:absolute;left:125.0px;top:353.0px;width:23px;text-align:center;line-height:14px;font-size:11px;color:#555;font-weight:normal;white-space:nowrap;">TH</div><div style="position:absolute;left:148.0px;top:353.0px;width:23px;text-align:center;line-height:14px;font-size:11px;color:#555;font-weight:normal;white-space:nowrap;">FR</div><div style="position:absolute;left:171.0px;top:353.0px;width:23px;text-align:center;line-height:14px;font-size:11px;color:#555;font-weight:normal;white-space:nowrap;">SA</div><div style="position:absolute;left:21.0px;top:375.0px;width:30px;text-align:right;line-height:15px;font-size:11.3px;color:#444;font-weight:normal;white-space:nowrap;">1</div><div style="position:absolute;left:44.0px;top:375.0px;width:30px;text-align:right;line-height:15px;font-size:11.3px;color:#333;font-weight:bold;white-space:nowrap;">2</div><div style="position:absolute;left:67.0px;top:375.0px;width:30px;text-align:right;line-height:15px;font-size:11.3px;color:#444;font-weight:normal;white-space:nowrap;">3</div><div style="position:absolute;left:90.0px;top:375.0px;width:30px;text-align:right;line-height:15px;font-size:11.3px;color:#333;font-weight:bold;white-space:nowrap;">4</div><div style="position:absolute;left:113.0px;top:375.0px;width:30px;text-align:right;line-height:15px;font-size:11.3px;color:#333;font-weight:bold;white-space:nowrap;">5</div><div style="position:absolute;left:136.0px;top:375.0px;width:30px;text-align:right;line-height:15px;font-size:11.3px;color:#333;font-weight:bold;white-space:nowrap;">6</div><div style="position:absolute;left:159.0px;top:375.0px;width:30px;text-align:right;line-height:15px;font-size:11.3px;color:#444;font-weight:normal;white-space:nowrap;">7</div><div style="position:absolute;left:21.0px;top:396.0px;width:30px;text-align:right;line-height:15px;font-size:11.3px;color:#444;font-weight:normal;white-space:nowrap;">8</div><div style="position:absolute;left:44.0px;top:396.0px;width:30px;text-align:right;line-height:15px;font-size:11.3px;color:#444;font-weight:normal;white-space:nowrap;">9</div><div style="position:absolute;left:67.0px;top:396.0px;width:30px;text-align:right;line-height:15px;font-size:11.3px;color:#333;font-weight:bold;white-space:nowrap;">10</div><div style="position:absolute;left:90.0px;top:396.0px;width:30px;text-align:right;line-height:15px;font-size:11.3px;color:#333;font-weight:bold;white-space:nowrap;">11</div><div style="position:absolute;left:113.0px;top:396.0px;width:30px;text-align:right;line-height:15px;font-size:11.3px;color:#333;font-weight:bold;white-space:nowrap;">12</div><div style="position:absolute;left:136.0px;top:396.0px;width:30px;text-align:right;line-height:15px;font-size:11.3px;color:#333;font-weight:bold;white-space:nowrap;">13</div><div style="position:absolute;left:159.0px;top:396.0px;width:30px;text-align:right;line-height:15px;font-size:11.3px;color:#444;font-weight:normal;white-space:nowrap;">14</div><div style="position:absolute;left:21.0px;top:417.0px;width:30px;text-align:right;line-height:15px;font-size:11.3px;color:#444;font-weight:normal;white-space:nowrap;">15</div><div style="position:absolute;left:44.0px;top:417.0px;width:30px;text-align:right;line-height:15px;font-size:11.3px;color:#444;font-weight:normal;white-space:nowrap;">16</div><div style="position:absolute;left:67.0px;top:417.0px;width:30px;text-align:right;line-height:15px;font-size:11.3px;color:#444;font-weight:normal;white-space:nowrap;">17</div><div style="position:absolute;left:90.0px;top:417.0px;width:30px;text-align:right;line-height:15px;font-size:11.3px;color:#333;font-weight:bold;white-space:nowrap;">18</div><div style="position:absolute;left:113.0px;top:417.0px;width:30px;text-align:right;line-height:15px;font-size:11.3px;color:#444;font-weight:normal;white-space:nowrap;">19</div><div style="position:absolute;left:136.0px;top:417.0px;width:30px;text-align:right;line-height:15px;font-size:11.3px;color:#333;font-weight:bold;white-space:nowrap;">20</div><div style="position:absolute;left:159.0px;top:417.0px;width:30px;text-align:right;line-height:15px;font-size:11.3px;color:#444;font-weight:normal;white-space:nowrap;">21</div><div style="position:absolute;left:21.0px;top:438.0px;width:30px;text-align:right;line-height:15px;font-size:11.3px;color:#444;font-weight:normal;white-space:nowrap;">22</div><div style="position:absolute;left:44.0px;top:438.0px;width:30px;text-align:right;line-height:15px;font-size:11.3px;color:#444;font-weight:normal;white-space:nowrap;">23</div><div style="position:absolute;left:67.0px;top:438.0px;width:30px;text-align:right;line-height:15px;font-size:11.3px;color:#444;font-weight:normal;white-space:nowrap;">24</div><div style="position:absolute;left:90.0px;top:438.0px;width:30px;text-align:right;line-height:15px;font-size:11.3px;color:#333;font-weight:bold;white-space:nowrap;">25</div><div style="position:absolute;left:113.0px;top:438.0px;width:30px;text-align:right;line-height:15px;font-size:11.3px;color:#333;font-weight:bold;white-space:nowrap;">26</div><div style="position:absolute;left:136.0px;top:438.0px;width:30px;text-align:right;line-height:15px;font-size:11.3px;color:#333;font-weight:bold;white-space:nowrap;">27</div><div style="position:absolute;left:159.0px;top:438.0px;width:30px;text-align:right;line-height:15px;font-size:11.3px;color:#444;font-weight:normal;white-space:nowrap;">28</div><div style="position:absolute;left:21.0px;top:459.0px;width:30px;text-align:right;line-height:15px;font-size:11.3px;color:#444;font-weight:normal;white-space:nowrap;">29</div><div style="position:absolute;left:44.0px;top:459.0px;width:30px;text-align:right;line-height:15px;font-size:11.3px;color:#444;font-weight:normal;white-space:nowrap;">30</div><div style="position:absolute;left:67.0px;top:459.0px;width:30px;text-align:right;line-height:15px;font-size:11.3px;color:#444;font-weight:normal;white-space:nowrap;">31</div><div style="position:absolute;left:90.0px;top:459.0px;width:30px;text-align:right;line-height:15px;font-size:11.3px;color:#333;font-weight:bold;white-space:nowrap;">1</div><div style="position:absolute;left:113.0px;top:459.0px;width:30px;text-align:right;line-height:15px;font-size:11.3px;color:#444;font-weight:normal;white-space:nowrap;">2</div><div style="position:absolute;left:136.0px;top:459.0px;width:30px;text-align:right;line-height:15px;font-size:11.3px;color:#444;font-weight:normal;white-space:nowrap;">3</div><div style="position:absolute;left:159.0px;top:459.0px;width:30px;text-align:right;line-height:15px;font-size:11.3px;color:#444;font-weight:normal;white-space:nowrap;">4</div><div style="position:absolute;left:21.0px;top:480.0px;width:30px;text-align:right;line-height:15px;font-size:11.3px;color:#444;font-weight:normal;white-space:nowrap;">5</div><div style="position:absolute;left:44.0px;top:480.0px;width:30px;text-align:right;line-height:15px;font-size:11.3px;color:#444;font-weight:normal;white-space:nowrap;">6</div><div style="position:absolute;left:67.0px;top:480.0px;width:30px;text-align:right;line-height:15px;font-size:11.3px;color:#444;font-weight:normal;white-space:nowrap;">7</div><div style="position:absolute;left:90.0px;top:480.0px;width:30px;text-align:right;line-height:15px;font-size:11.3px;color:#333;font-weight:bold;white-space:nowrap;">8</div><div style="position:absolute;left:113.0px;top:480.0px;width:30px;text-align:right;line-height:15px;font-size:11.3px;color:#444;font-weight:normal;white-space:nowrap;">9</div><div style="position:absolute;left:136.0px;top:480.0px;width:30px;text-align:right;line-height:15px;font-size:11.3px;color:#444;font-weight:normal;white-space:nowrap;">10</div><div style="position:absolute;left:159.0px;top:480.0px;width:30px;text-align:right;line-height:15px;font-size:11.3px;color:#444;font-weight:normal;white-space:nowrap;">11</div><div style="position:absolute;left:0;top:507px;width:230px;height:184px;overflow:hidden"><svg style="position:absolute;left:41px;top:-3.0px;" width="13" height="13" viewBox="0 0 13 13"><rect x="0.5" y="0.5" width="12" height="12" fill="#fff" stroke="#8A8A8A"/></svg><div style="position:absolute;left:59px;top:-4.5px;line-height:16px;font-size:11.7px;color:#444;font-weight:normal;white-space:nowrap">Price, Curtis</div><svg style="position:absolute;left:41px;top:21.0px;" width="13" height="13" viewBox="0 0 13 13"><rect x="0.5" y="0.5" width="12" height="12" fill="#fff" stroke="#8A8A8A"/></svg><div style="position:absolute;left:59px;top:19.5px;line-height:16px;font-size:11.7px;color:#444;font-weight:normal;white-space:nowrap">Reany, Tori</div><svg style="position:absolute;left:41px;top:45.0px;" width="13" height="13" viewBox="0 0 13 13"><rect x="0.5" y="0.5" width="12" height="12" fill="#fff" stroke="#8A8A8A"/></svg><div style="position:absolute;left:59px;top:43.5px;line-height:16px;font-size:11.7px;color:#444;font-weight:normal;white-space:nowrap">Personal</div><svg style="position:absolute;left:41px;top:69.0px;" width="13" height="13" viewBox="0 0 13 13"><rect x="0.5" y="0.5" width="12" height="12" fill="#fff" stroke="#8A8A8A"/></svg><div style="position:absolute;left:59px;top:67.5px;line-height:16px;font-size:11.7px;color:#444;font-weight:normal;white-space:nowrap">Calendar - ITStraining</div><svg style="position:absolute;left:41px;top:93.0px;" width="13" height="13" viewBox="0 0 13 13"><rect x="0.5" y="0.5" width="12" height="12" fill="#fff" stroke="#8A8A8A"/></svg><div style="position:absolute;left:59px;top:91.5px;line-height:16px;font-size:11.7px;color:#444;font-weight:normal;white-space:nowrap">Testing Group Calendar</div><div style="position:absolute;left:6px;top:113px;width:203px;height:24px;background:#DCF0DC"></div><svg style="position:absolute;left:41px;top:117.5px;" width="13" height="13" viewBox="0 0 13 13"><rect x="0.5" y="0.5" width="12" height="12" fill="#fff" stroke="#8A8A8A"/><path d="M2.5 6.5 L5 9.5 L10.5 2.5" fill="none" stroke="#555" stroke-width="1.2"/></svg><div style="position:absolute;left:59px;top:116.0px;line-height:16px;font-size:11.7px;color:#333;font-weight:bold;white-space:nowrap">Testing</div><svg style="position:absolute;left:12px;top:162px;" width="7" height="12" viewBox="0 0 7 12"><path d="M1 1 L6 6 L1 11 Z" fill="none" stroke="#777"/></svg><svg style="position:absolute;left:22px;top:161.5px;" width="13" height="13" viewBox="0 0 13 13"><rect x="0.5" y="0.5" width="12" height="12" fill="#fff" stroke="#8A8A8A"/></svg><div style="position:absolute;left:40px;top:160.0px;line-height:16px;font-size:14.3px;color:#333;font-weight:normal;white-space:nowrap">Other Calendars</div></div><div style="position:absolute;left:6px;top:506px;width:220px;height:1px;background:#DDDDDD"></div><div style="position:absolute;left:6px;top:507px;width:220px;height:1px;background:#FFFFFF"></div><div style="position:absolute;left:0px;top:691px;width:231px;height:43px;background:#E6E6E6;border-top:1px solid #D6D6D6;box-sizing:border-box"></div><div style="position:absolute;left:42px;top:692px;width:42px;height:42px;background:#E9E9E9"></div><svg style="position:absolute;left:12px;top:706px;" width="18" height="14" viewBox="0 0 18 14"><rect x="0.5" y="0.5" width="16" height="12.5" fill="#666"/><path d="M0.5 1 L8.5 7.5 L16.5 1" fill="none" stroke="#E6E6E6" stroke-width="1.1"/></svg><svg style="position:absolute;left:55.5px;top:706px;" width="16" height="14" viewBox="0 0 16 14"><rect x="0" y="0" width="15" height="2.5" fill="#1E6FC0"/><rect x="0.00" y="3.8" width="1.9" height="1.9" fill="#1E6FC0"/><rect x="0.00" y="6.8" width="1.9" height="1.9" fill="#1E6FC0"/><rect x="0.00" y="9.8" width="1.9" height="1.9" fill="#1E6FC0"/><rect x="3.05" y="3.8" width="1.9" height="1.9" fill="#1E6FC0"/><rect x="3.05" y="6.8" width="1.9" height="1.9" fill="#1E6FC0"/><rect x="3.05" y="9.8" width="1.9" height="1.9" fill="#1E6FC0"/><rect x="6.10" y="3.8" width="1.9" height="1.9" fill="#1E6FC0"/><rect x="6.10" y="6.8" width="1.9" height="1.9" fill="#1E6FC0"/><rect x="6.10" y="9.8" width="1.9" height="1.9" fill="#1E6FC0"/><rect x="9.15" y="3.8" width="1.9" height="1.9" fill="#1E6FC0"/><rect x="9.15" y="6.8" width="1.9" height="1.9" fill="#1E6FC0"/><rect x="9.15" y="9.8" width="1.9" height="1.9" fill="#1E6FC0"/><rect x="12.20" y="3.8" width="1.9" height="1.9" fill="#1E6FC0"/><rect x="12.20" y="6.8" width="1.9" height="1.9" fill="#1E6FC0"/><rect x="12.20" y="9.8" width="1.9" height="1.9" fill="#1E6FC0"/></svg><svg style="position:absolute;left:96px;top:705.5px;" width="18" height="14" viewBox="0 0 18 14"><circle cx="5" cy="5" r="3" fill="#666"/><path d="M0 13 Q0 8.5 5 8.5 Q10 8.5 10 13 Z" fill="#666"/><circle cx="12.5" cy="4" r="3" fill="#666"/><path d="M8 12 Q8 7.5 12.5 7.5 Q17 7.5 17 12 Z" fill="#666"/></svg><svg style="position:absolute;left:140px;top:705px;" width="14" height="16" viewBox="0 0 14 16"><rect x="0.5" y="2.5" width="12" height="13" fill="none" stroke="#555" stroke-width="1.4"/><rect x="4" y="0" width="5" height="3.5" fill="#555"/><path d="M3.5 9 L6 11.5 L10 5.5" fill="none" stroke="#555" stroke-width="1.3"/></svg><svg style="position:absolute;left:178px;top:710.5px;" width="22" height="5" viewBox="0 0 22 5"><circle cx="2.5" cy="2.5" r="2" fill="#555"/><circle cx="10.5" cy="2.5" r="2" fill="#555"/><circle cx="18.5" cy="2.5" r="2" fill="#555"/></svg><div style="position:absolute;left:0px;top:734px;width:1341px;height:22px;background:#F0F0F0;border-top:1px solid #D4D4D4;box-sizing:border-box"></div><div style="position:absolute;left:8px;top:737.5px;line-height:14px;font-size:10.9px;color:#555;font-weight:normal;white-space:nowrap;">Items: 1</div><svg style="position:absolute;left:87px;top:738px;" width="12" height="13" viewBox="0 0 12 13"><path d="M6 1 Q10 1 10 6 V8 H2 V6 Q2 1 6 1 Z" fill="#777"/><rect x="0" y="8.5" width="12" height="1.2" fill="#777"/><rect x="4.5" y="10.5" width="3" height="2" fill="#777"/></svg><div style="position:absolute;left:104px;top:737.5px;line-height:14px;font-size:10.9px;color:#555;font-weight:normal;white-space:nowrap;">Reminders: 70</div><div style="position:absolute;left:891px;top:737.0px;line-height:15px;font-size:11.7px;color:#444;font-weight:normal;white-space:nowrap;">Online with: Microsoft Exchange</div><div style="position:absolute;left:1077px;top:734px;width:38px;height:22px;background:#CFCFCF"></div><svg style="position:absolute;left:1088px;top:737px;" width="16" height="15" viewBox="0 0 16 15"><rect x="0.5" y="0.5" width="15" height="13" fill="none" stroke="#666"/><line x1="4.5" y1="0.5" x2="4.5" y2="13.5" stroke="#666"/></svg><svg style="position:absolute;left:1126px;top:737px;" width="16" height="15" viewBox="0 0 16 15"><path d="M1 2 H7 V13 H1 Z M9 2 H15 V13 H9 Z" fill="none" stroke="#666"/><line x1="2.5" y1="5" x2="5.5" y2="5" stroke="#666"/><line x1="2.5" y1="8" x2="5.5" y2="8" stroke="#666"/><line x1="10.5" y1="5" x2="13.5" y2="5" stroke="#666"/><line x1="10.5" y1="8" x2="13.5" y2="8" stroke="#666"/></svg><div style="position:absolute;left:1157px;top:744px;width:7px;height:2px;background:#555"></div><div style="position:absolute;left:1168px;top:744px;width:100px;height:1px;background:#999"></div><div style="position:absolute;left:1216px;top:739px;width:4px;height:11px;background:#555"></div><svg style="position:absolute;left:1271px;top:739px;" width="10" height="10" viewBox="0 0 10 10"><path d="M5 0.5 V9.5 M0.5 5 H9.5" stroke="#555" stroke-width="1.8"/></svg><div style="position:absolute;left:1297px;top:737.5px;line-height:14px;font-size:10.5px;color:#555;font-weight:normal;white-space:nowrap;">100%</div><div style="position:absolute;left:231px;top:151px;width:1110px;height:582px;background:#FFFFFF"></div><svg style="position:absolute;left:250px;top:167px;" width="10" height="12" viewBox="0 0 10 12"><path d="M8 1 L2 6 L8 11 Z" fill="#555"/></svg><svg style="position:absolute;left:275px;top:167px;" width="10" height="12" viewBox="0 0 10 12"><path d="M2 1 L8 6 L2 11 Z" fill="#555"/></svg><div style="position:absolute;left:304px;top:162.0px;line-height:26px;font-size:20px;color:#3C3C3C;font-weight:normal;white-space:nowrap;letter-spacing:-0.65px">June 2018</div><div style="position:absolute;left:853px;top:159.5px;line-height:15px;font-size:11.5px;color:#555;font-weight:normal;white-space:nowrap;">Tomorrow</div><div style="position:absolute;left:849px;top:174.0px;line-height:15px;font-size:11.2px;color:#444;font-weight:bold;white-space:nowrap;">77&#176; F / 72&#176; F</div><svg style="position:absolute;left:931px;top:160px;" width="24" height="24" viewBox="0 0 24 24"><path d="M5 13 Q1 13 1.5 9.5 Q2 6.5 5.5 7 Q6.5 2.5 11 2.5 Q15.5 2.5 16.5 6.5 Q21 6 21 10 Q21 13 18 13 Z" fill="none" stroke="#777" stroke-width="1.2"/><rect x="7" y="15" width="1.6" height="2.2" fill="#2A9FD8"/><rect x="11" y="15" width="1.6" height="2.2" fill="#2A9FD8"/><rect x="15" y="15" width="1.6" height="2.2" fill="#2A9FD8"/><rect x="9" y="18" width="1.6" height="2.2" fill="#2A9FD8"/><rect x="13" y="18" width="1.6" height="2.2" fill="#2A9FD8"/></svg><div style="position:absolute;left:966px;top:159.5px;line-height:15px;font-size:11.5px;color:#555;font-weight:normal;white-space:nowrap;">Friday</div><div style="position:absolute;left:966px;top:174.0px;line-height:15px;font-size:11.2px;color:#444;font-weight:bold;white-space:nowrap;">77&#176; F / 71&#176; F</div><div style="position:absolute;left:1057px;top:165px;width:279px;height:20px;background:#fff;border:1px solid #ABABAB;box-sizing:border-box"></div><div style="position:absolute;left:1064px;top:168.0px;line-height:14px;font-size:11.1px;color:#666;font-weight:normal;white-space:nowrap;">Search Testing (Ctrl+E)</div><svg style="position:absolute;left:1309px;top:167px;" width="14" height="14" viewBox="0 0 14 14"><circle cx="8.5" cy="5.5" r="4" fill="none" stroke="#2B6BB5" stroke-width="1.6"/><line x1="5.5" y1="8.5" x2="1" y2="13" stroke="#2B6BB5" stroke-width="2"/></svg><svg style="position:absolute;left:240px;top:197px;" width="210" height="22" viewBox="0 0 210 22"><path d="M0 0 H198 L208 22 H0 Z" fill="#DAEEF9"/></svg><div style="position:absolute;left:250px;top:200.0px;line-height:15px;font-size:11.5px;color:#222;font-weight:normal;white-space:nowrap;">Calendar - nglick@siue.edu</div><svg style="position:absolute;left:405.5px;top:203.5px;" width="9" height="9" viewBox="0 0 9 9"><path d="M1 1 L8 8 M8 1 L1 8" stroke="#666" stroke-width="2.1"/></svg><div style="position:absolute;left:240px;top:219px;width:532px;height:25px;background:#DAEEF9"></div><div style="position:absolute;left:469px;top:219px;width:76px;height:25px;background:#8CB9E3"></div><div style="position:absolute;left:251px;top:224.0px;line-height:15px;font-size:11.2px;color:#444;font-weight:normal;white-space:nowrap;">SUN</div><div style="position:absolute;left:327px;top:224.0px;line-height:15px;font-size:11.2px;color:#444;font-weight:normal;white-space:nowrap;">MON</div><div style="position:absolute;left:403px;top:224.0px;line-height:15px;font-size:11.2px;color:#444;font-weight:normal;white-space:nowrap;">TUE</div><div style="position:absolute;left:479px;top:224.0px;line-height:15px;font-size:11.2px;color:#fff;font-weight:bold;white-space:nowrap;">WED</div><div style="position:absolute;left:555px;top:224.0px;line-height:15px;font-size:11.2px;color:#444;font-weight:normal;white-space:nowrap;">THU</div><div style="position:absolute;left:631px;top:224.0px;line-height:15px;font-size:11.2px;color:#444;font-weight:normal;white-space:nowrap;">FRI</div><div style="position:absolute;left:707px;top:224.0px;line-height:15px;font-size:11.2px;color:#444;font-weight:normal;white-space:nowrap;">SAT</div><div style="position:absolute;left:316px;top:244px;width:1px;height:490px;background:#E1E1E1"></div><div style="position:absolute;left:392px;top:244px;width:1px;height:490px;background:#E1E1E1"></div><div style="position:absolute;left:468px;top:244px;width:1px;height:490px;background:#E1E1E1"></div><div style="position:absolute;left:544px;top:244px;width:1px;height:490px;background:#E1E1E1"></div><div style="position:absolute;left:620px;top:244px;width:1px;height:490px;background:#E1E1E1"></div><div style="position:absolute;left:696px;top:244px;width:1px;height:490px;background:#E1E1E1"></div><div style="position:absolute;left:772px;top:244px;width:1px;height:490px;background:#E1E1E1"></div><div style="position:absolute;left:240px;top:342px;width:532px;height:1px;background:#E1E1E1"></div><div style="position:absolute;left:240px;top:440px;width:532px;height:1px;background:#E1E1E1"></div><div style="position:absolute;left:240px;top:538px;width:532px;height:1px;background:#E1E1E1"></div><div style="position:absolute;left:240px;top:636px;width:532px;height:1px;background:#E1E1E1"></div><div style="position:absolute;left:240px;top:734px;width:532px;height:1px;background:#E1E1E1"></div><div style="position:absolute;left:248px;top:249.5px;line-height:20px;font-size:15px;color:#444;font-weight:normal;white-space:nowrap;">May 27</div><div style="position:absolute;left:324px;top:249.5px;line-height:20px;font-size:15px;color:#444;font-weight:normal;white-space:nowrap;">28</div><div style="position:absolute;left:400px;top:249.5px;line-height:20px;font-size:15px;color:#444;font-weight:normal;white-space:nowrap;">29</div><div style="position:absolute;left:476px;top:249.5px;line-height:20px;font-size:15px;color:#444;font-weight:normal;white-space:nowrap;">30</div><div style="position:absolute;left:552px;top:249.5px;line-height:20px;font-size:15px;color:#444;font-weight:normal;white-space:nowrap;">31</div><div style="position:absolute;left:628px;top:249.5px;line-height:20px;font-size:15px;color:#333;font-weight:bold;white-space:nowrap;">Jun 1</div><div style="position:absolute;left:704px;top:249.5px;line-height:20px;font-size:15px;color:#444;font-weight:normal;white-space:nowrap;">2</div><div style="position:absolute;left:248px;top:347.5px;line-height:20px;font-size:15px;color:#444;font-weight:normal;white-space:nowrap;">3</div><div style="position:absolute;left:324px;top:347.5px;line-height:20px;font-size:15px;color:#444;font-weight:normal;white-space:nowrap;">4</div><div style="position:absolute;left:400px;top:347.5px;line-height:20px;font-size:15px;color:#444;font-weight:normal;white-space:nowrap;">5</div><div style="position:absolute;left:476px;top:347.5px;line-height:20px;font-size:15px;color:#444;font-weight:normal;white-space:nowrap;">6</div><div style="position:absolute;left:552px;top:347.5px;line-height:20px;font-size:15px;color:#444;font-weight:normal;white-space:nowrap;">7</div><div style="position:absolute;left:628px;top:347.5px;line-height:20px;font-size:15px;color:#444;font-weight:normal;white-space:nowrap;">8</div><div style="position:absolute;left:704px;top:347.5px;line-height:20px;font-size:15px;color:#444;font-weight:normal;white-space:nowrap;">9</div><div style="position:absolute;left:248px;top:445.5px;line-height:20px;font-size:15px;color:#444;font-weight:normal;white-space:nowrap;">10</div><div style="position:absolute;left:324px;top:445.5px;line-height:20px;font-size:15px;color:#444;font-weight:normal;white-space:nowrap;">11</div><div style="position:absolute;left:400px;top:445.5px;line-height:20px;font-size:15px;color:#444;font-weight:normal;white-space:nowrap;">12</div><div style="position:absolute;left:476px;top:445.5px;line-height:20px;font-size:15px;color:#444;font-weight:normal;white-space:nowrap;">13</div><div style="position:absolute;left:552px;top:445.5px;line-height:20px;font-size:15px;color:#444;font-weight:normal;white-space:nowrap;">14</div><div style="position:absolute;left:628px;top:445.5px;line-height:20px;font-size:15px;color:#444;font-weight:normal;white-space:nowrap;">15</div><div style="position:absolute;left:704px;top:445.5px;line-height:20px;font-size:15px;color:#444;font-weight:normal;white-space:nowrap;">16</div><div style="position:absolute;left:248px;top:543.5px;line-height:20px;font-size:15px;color:#444;font-weight:normal;white-space:nowrap;">17</div><div style="position:absolute;left:324px;top:543.5px;line-height:20px;font-size:15px;color:#444;font-weight:normal;white-space:nowrap;">18</div><div style="position:absolute;left:400px;top:543.5px;line-height:20px;font-size:15px;color:#444;font-weight:normal;white-space:nowrap;">19</div><div style="position:absolute;left:476px;top:543.5px;line-height:20px;font-size:15px;color:#444;font-weight:normal;white-space:nowrap;">20</div><div style="position:absolute;left:552px;top:543.5px;line-height:20px;font-size:15px;color:#444;font-weight:normal;white-space:nowrap;">21</div><div style="position:absolute;left:628px;top:543.5px;line-height:20px;font-size:15px;color:#444;font-weight:normal;white-space:nowrap;">22</div><div style="position:absolute;left:704px;top:543.5px;line-height:20px;font-size:15px;color:#444;font-weight:normal;white-space:nowrap;">23</div><div style="position:absolute;left:248px;top:641.5px;line-height:20px;font-size:15px;color:#444;font-weight:normal;white-space:nowrap;">24</div><div style="position:absolute;left:324px;top:641.5px;line-height:20px;font-size:15px;color:#444;font-weight:normal;white-space:nowrap;">25</div><div style="position:absolute;left:400px;top:641.5px;line-height:20px;font-size:15px;color:#444;font-weight:normal;white-space:nowrap;">26</div><div style="position:absolute;left:476px;top:641.5px;line-height:20px;font-size:15px;color:#444;font-weight:normal;white-space:nowrap;">27</div><div style="position:absolute;left:552px;top:641.5px;line-height:20px;font-size:15px;color:#444;font-weight:normal;white-space:nowrap;">28</div><div style="position:absolute;left:628px;top:641.5px;line-height:20px;font-size:15px;color:#444;font-weight:normal;white-space:nowrap;">29</div><div style="position:absolute;left:704px;top:641.5px;line-height:20px;font-size:15px;color:#444;font-weight:normal;white-space:nowrap;">30</div><svg style="position:absolute;left:792px;top:197px;" width="122" height="22" viewBox="0 0 122 22"><path d="M0 0 H110 L120 22 H0 Z" fill="#DDF1DD"/></svg><svg style="position:absolute;left:878.5px;top:203.5px;" width="9" height="9" viewBox="0 0 9 9"><path d="M1 1 L8 8 M8 1 L1 8" stroke="#666" stroke-width="2.1"/></svg><div style="position:absolute;left:792px;top:219px;width:532px;height:25px;background:#DDF1DD"></div><div style="position:absolute;left:1020px;top:219px;width:76px;height:25px;background:#85CE8F"></div><div style="position:absolute;left:803px;top:224.0px;line-height:15px;font-size:11.2px;color:#444;font-weight:normal;white-space:nowrap;">SUN</div><div style="position:absolute;left:879px;top:224.0px;line-height:15px;font-size:11.2px;color:#444;font-weight:normal;white-space:nowrap;">MON</div><div style="position:absolute;left:955px;top:224.0px;line-height:15px;font-size:11.2px;color:#444;font-weight:normal;white-space:nowrap;">TUE</div><div style="position:absolute;left:1031px;top:224.0px;line-height:15px;font-size:11.2px;color:#fff;font-weight:bold;white-space:nowrap;">WED</div><div style="position:absolute;left:1107px;top:224.0px;line-height:15px;font-size:11.2px;color:#444;font-weight:normal;white-space:nowrap;">THU</div><div style="position:absolute;left:1183px;top:224.0px;line-height:15px;font-size:11.2px;color:#444;font-weight:normal;white-space:nowrap;">FRI</div><div style="position:absolute;left:1259px;top:224.0px;line-height:15px;font-size:11.2px;color:#444;font-weight:normal;white-space:nowrap;">SAT</div><div style="position:absolute;left:868px;top:244px;width:1px;height:490px;background:#E1E1E1"></div><div style="position:absolute;left:944px;top:244px;width:1px;height:490px;background:#E1E1E1"></div><div style="position:absolute;left:1020px;top:244px;width:1px;height:490px;background:#E1E1E1"></div><div style="position:absolute;left:1096px;top:244px;width:1px;height:490px;background:#E1E1E1"></div><div style="position:absolute;left:1172px;top:244px;width:1px;height:490px;background:#E1E1E1"></div><div style="position:absolute;left:1248px;top:244px;width:1px;height:490px;background:#E1E1E1"></div><div style="position:absolute;left:1324px;top:244px;width:1px;height:490px;background:#E1E1E1"></div><div style="position:absolute;left:792px;top:342px;width:532px;height:1px;background:#E1E1E1"></div><div style="position:absolute;left:792px;top:440px;width:532px;height:1px;background:#E1E1E1"></div><div style="position:absolute;left:792px;top:538px;width:532px;height:1px;background:#E1E1E1"></div><div style="position:absolute;left:792px;top:636px;width:532px;height:1px;background:#E1E1E1"></div><div style="position:absolute;left:792px;top:734px;width:532px;height:1px;background:#E1E1E1"></div><div style="position:absolute;left:800px;top:249.5px;line-height:20px;font-size:15px;color:#444;font-weight:normal;white-space:nowrap;">27</div><div style="position:absolute;left:876px;top:249.5px;line-height:20px;font-size:15px;color:#444;font-weight:normal;white-space:nowrap;">28</div><div style="position:absolute;left:952px;top:249.5px;line-height:20px;font-size:15px;color:#444;font-weight:normal;white-space:nowrap;">29</div><div style="position:absolute;left:1028px;top:249.5px;line-height:20px;font-size:15px;color:#444;font-weight:normal;white-space:nowrap;">30</div><div style="position:absolute;left:1104px;top:249.5px;line-height:20px;font-size:15px;color:#444;font-weight:normal;white-space:nowrap;">31</div><div style="position:absolute;left:1180px;top:249.5px;line-height:20px;font-size:15px;color:#333;font-weight:bold;white-space:nowrap;">Jun 1</div><div style="position:absolute;left:1256px;top:249.5px;line-height:20px;font-size:15px;color:#444;font-weight:normal;white-space:nowrap;">2</div><div style="position:absolute;left:800px;top:347.5px;line-height:20px;font-size:15px;color:#444;font-weight:normal;white-space:nowrap;">3</div><div style="position:absolute;left:876px;top:347.5px;line-height:20px;font-size:15px;color:#444;font-weight:normal;white-space:nowrap;">4</div><div style="position:absolute;left:952px;top:347.5px;line-height:20px;font-size:15px;color:#444;font-weight:normal;white-space:nowrap;">5</div><div style="position:absolute;left:1028px;top:347.5px;line-height:20px;font-size:15px;color:#444;font-weight:normal;white-space:nowrap;">6</div><div style="position:absolute;left:1104px;top:347.5px;line-height:20px;font-size:15px;color:#444;font-weight:normal;white-space:nowrap;">7</div><div style="position:absolute;left:1180px;top:347.5px;line-height:20px;font-size:15px;color:#444;font-weight:normal;white-space:nowrap;">8</div><div style="position:absolute;left:1256px;top:347.5px;line-height:20px;font-size:15px;color:#444;font-weight:normal;white-space:nowrap;">9</div><div style="position:absolute;left:800px;top:445.5px;line-height:20px;font-size:15px;color:#444;font-weight:normal;white-space:nowrap;">10</div><div style="position:absolute;left:876px;top:445.5px;line-height:20px;font-size:15px;color:#444;font-weight:normal;white-space:nowrap;">11</div><div style="position:absolute;left:952px;top:445.5px;line-height:20px;font-size:15px;color:#444;font-weight:normal;white-space:nowrap;">12</div><div style="position:absolute;left:1028px;top:445.5px;line-height:20px;font-size:15px;color:#444;font-weight:normal;white-space:nowrap;">13</div><div style="position:absolute;left:1104px;top:445.5px;line-height:20px;font-size:15px;color:#444;font-weight:normal;white-space:nowrap;">14</div><div style="position:absolute;left:1180px;top:445.5px;line-height:20px;font-size:15px;color:#444;font-weight:normal;white-space:nowrap;">15</div><div style="position:absolute;left:1256px;top:445.5px;line-height:20px;font-size:15px;color:#444;font-weight:normal;white-space:nowrap;">16</div><div style="position:absolute;left:800px;top:543.5px;line-height:20px;font-size:15px;color:#444;font-weight:normal;white-space:nowrap;">17</div><div style="position:absolute;left:876px;top:543.5px;line-height:20px;font-size:15px;color:#444;font-weight:normal;white-space:nowrap;">18</div><div style="position:absolute;left:952px;top:543.5px;line-height:20px;font-size:15px;color:#444;font-weight:normal;white-space:nowrap;">19</div><div style="position:absolute;left:1028px;top:543.5px;line-height:20px;font-size:15px;color:#6CC17A;font-weight:bold;white-space:nowrap;">20</div><div style="position:absolute;left:1104px;top:543.5px;line-height:20px;font-size:15px;color:#444;font-weight:normal;white-space:nowrap;">21</div><div style="position:absolute;left:1180px;top:543.5px;line-height:20px;font-size:15px;color:#444;font-weight:normal;white-space:nowrap;">22</div><div style="position:absolute;left:1256px;top:543.5px;line-height:20px;font-size:15px;color:#444;font-weight:normal;white-space:nowrap;">23</div><div style="position:absolute;left:800px;top:641.5px;line-height:20px;font-size:15px;color:#444;font-weight:normal;white-space:nowrap;">24</div><div style="position:absolute;left:876px;top:641.5px;line-height:20px;font-size:15px;color:#444;font-weight:normal;white-space:nowrap;">25</div><div style="position:absolute;left:952px;top:641.5px;line-height:20px;font-size:15px;color:#444;font-weight:normal;white-space:nowrap;">26</div><div style="position:absolute;left:1028px;top:641.5px;line-height:20px;font-size:15px;color:#444;font-weight:normal;white-space:nowrap;">27</div><div style="position:absolute;left:1104px;top:641.5px;line-height:20px;font-size:15px;color:#444;font-weight:normal;white-space:nowrap;">28</div><div style="position:absolute;left:1180px;top:641.5px;line-height:20px;font-size:15px;color:#444;font-weight:normal;white-space:nowrap;">29</div><div style="position:absolute;left:1256px;top:641.5px;line-height:20px;font-size:15px;color:#444;font-weight:normal;white-space:nowrap;">30</div><div style="position:absolute;left:1020px;top:538px;width:76px;height:4px;background:#85CE8F"></div><div style="position:absolute;left:773px;top:151px;width:19px;height:583px;background:#fff"></div><div style="position:absolute;left:772px;top:244px;width:1px;height:490px;background:#E1E1E1"></div><div style="position:absolute;left:792px;top:244px;width:1px;height:490px;background:#E1E1E1"></div><div style="position:absolute;left:772px;top:342px;width:20px;height:1px;background:#E1E1E1"></div><div style="position:absolute;left:772px;top:440px;width:20px;height:1px;background:#E1E1E1"></div><div style="position:absolute;left:772px;top:538px;width:20px;height:1px;background:#E1E1E1"></div><div style="position:absolute;left:772px;top:636px;width:20px;height:1px;background:#E1E1E1"></div><div style="position:absolute;left:772px;top:734px;width:20px;height:1px;background:#E1E1E1"></div><div style="position:absolute;left:240px;top:244px;width:1px;height:490px;background:#E1E1E1"></div><div style="position:absolute;left:1324px;top:244px;width:1px;height:490px;background:#E1E1E1"></div><div style="position:absolute;left:393px;top:274px;width:66px;height:31px;background:#C5E5F9"></div><div style="position:absolute;left:393px;top:274px;width:7px;height:31px;background:#9DC5EC"></div><div style="position:absolute;left:403px;top:273.6px;line-height:14px;font-size:10.8px;color:#222;font-weight:normal;white-space:nowrap;">11:00am</div><div style="position:absolute;left:403px;top:286.2px;line-height:14px;font-size:10.8px;color:#222;font-weight:normal;white-space:nowrap;">CMIS 260</div><div style="position:absolute;left:393px;top:306px;width:66px;height:18px;background:#C5E5F9"></div><div style="position:absolute;left:393px;top:306px;width:7px;height:18px;background:#9DC5EC"></div><div style="position:absolute;left:403px;top:306.5px;line-height:14px;font-size:10.8px;color:#222;font-weight:normal;white-space:nowrap;">12:30pm</div><div style="position:absolute;left:469px;top:274px;width:66px;height:31px;background:#C5E5F9"></div><div style="position:absolute;left:469px;top:274px;width:7px;height:31px;background:#9DC5EC"></div><div style="position:absolute;left:479px;top:273.6px;line-height:14px;font-size:10.8px;color:#222;font-weight:normal;white-space:nowrap;">11:00am</div><div style="position:absolute;left:479px;top:286.2px;line-height:14px;font-size:10.8px;color:#222;font-weight:normal;white-space:nowrap;">CMIS 260</div><div style="position:absolute;left:469px;top:306px;width:66px;height:18px;background:#C5E5F9"></div><div style="position:absolute;left:469px;top:306px;width:7px;height:18px;background:#9DC5EC"></div><div style="position:absolute;left:479px;top:306.5px;line-height:14px;font-size:10.8px;color:#222;font-weight:normal;white-space:nowrap;">12:30pm</div><div style="position:absolute;left:317px;top:372px;width:66px;height:31px;background:#C5E5F9"></div><div style="position:absolute;left:317px;top:372px;width:7px;height:31px;background:#9DC5EC"></div><div style="position:absolute;left:327px;top:371.6px;line-height:14px;font-size:10.8px;color:#222;font-weight:normal;white-space:nowrap;">11:00am</div><div style="position:absolute;left:327px;top:384.2px;line-height:14px;font-size:10.8px;color:#222;font-weight:normal;white-space:nowrap;">CMIS 260</div><div style="position:absolute;left:317px;top:404px;width:66px;height:18px;background:#C5E5F9"></div><div style="position:absolute;left:317px;top:404px;width:7px;height:18px;background:#9DC5EC"></div><div style="position:absolute;left:327px;top:404.5px;line-height:14px;font-size:10.8px;color:#222;font-weight:normal;white-space:nowrap;">12:30pm</div><div style="position:absolute;left:317px;top:470px;width:66px;height:18px;background:#C5E5F9"></div><div style="position:absolute;left:317px;top:470px;width:7px;height:18px;background:#9DC5EC"></div><div style="position:absolute;left:327px;top:470.5px;line-height:14px;font-size:10.8px;color:#222;font-weight:normal;white-space:nowrap;">7:30am ...</div><div style="position:absolute;left:317px;top:489px;width:66px;height:18px;background:#C5E5F9"></div><div style="position:absolute;left:317px;top:489px;width:7px;height:18px;background:#9DC5EC"></div><div style="position:absolute;left:327px;top:489.5px;line-height:14px;font-size:10.8px;color:#222;font-weight:normal;white-space:nowrap;">11:00am</div><div style="position:absolute;left:317px;top:508px;width:66px;height:18px;background:#C5E5F9"></div><div style="position:absolute;left:317px;top:508px;width:7px;height:18px;background:#9DC5EC"></div><div style="position:absolute;left:327px;top:508.5px;line-height:14px;font-size:10.8px;color:#222;font-weight:normal;white-space:nowrap;">12:30pm</div><div style="position:absolute;left:317px;top:568px;width:66px;height:31px;background:#C5E5F9"></div><div style="position:absolute;left:317px;top:568px;width:7px;height:31px;background:#9DC5EC"></div><div style="position:absolute;left:327px;top:567.6px;line-height:14px;font-size:10.8px;color:#222;font-weight:normal;white-space:nowrap;">11:00am</div><div style="position:absolute;left:327px;top:580.2px;line-height:14px;font-size:10.8px;color:#222;font-weight:normal;white-space:nowrap;">CMIS 260</div><div style="position:absolute;left:317px;top:600px;width:66px;height:18px;background:#C5E5F9"></div><div style="position:absolute;left:317px;top:600px;width:7px;height:18px;background:#9DC5EC"></div><div style="position:absolute;left:327px;top:600.5px;line-height:14px;font-size:10.8px;color:#222;font-weight:normal;white-space:nowrap;">12:30pm</div><div style="position:absolute;left:393px;top:372px;width:66px;height:31px;background:#C5E5F9"></div><div style="position:absolute;left:393px;top:372px;width:7px;height:31px;background:#9DC5EC"></div><div style="position:absolute;left:403px;top:371.6px;line-height:14px;font-size:10.8px;color:#222;font-weight:normal;white-space:nowrap;">11:00am</div><div style="position:absolute;left:403px;top:384.2px;line-height:14px;font-size:10.8px;color:#222;font-weight:normal;white-space:nowrap;">CMIS 26...</div><div style="position:absolute;left:393px;top:404px;width:66px;height:18px;background:#C5E5F9"></div><div style="position:absolute;left:393px;top:404px;width:7px;height:18px;background:#9DC5EC"></div><div style="position:absolute;left:403px;top:404.5px;line-height:14px;font-size:10.8px;color:#222;font-weight:normal;white-space:nowrap;">12:30pm</div><div style="position:absolute;left:393px;top:470px;width:66px;height:18px;background:#C5E5F9"></div><div style="position:absolute;left:393px;top:470px;width:7px;height:18px;background:#9DC5EC"></div><div style="position:absolute;left:403px;top:470.5px;line-height:14px;font-size:10.8px;color:#222;font-weight:normal;white-space:nowrap;">7:30am ...</div><div style="position:absolute;left:393px;top:489px;width:66px;height:18px;background:#C5E5F9"></div><div style="position:absolute;left:393px;top:489px;width:7px;height:18px;background:#9DC5EC"></div><div style="position:absolute;left:403px;top:489.5px;line-height:14px;font-size:10.8px;color:#222;font-weight:normal;white-space:nowrap;">11:00am</div><div style="position:absolute;left:393px;top:508px;width:66px;height:18px;background:#C5E5F9"></div><div style="position:absolute;left:393px;top:508px;width:7px;height:18px;background:#9DC5EC"></div><div style="position:absolute;left:403px;top:508.5px;line-height:14px;font-size:10.8px;color:#222;font-weight:normal;white-space:nowrap;">12:30pm</div><div style="position:absolute;left:393px;top:568px;width:66px;height:31px;background:#C5E5F9"></div><div style="position:absolute;left:393px;top:568px;width:7px;height:31px;background:#9DC5EC"></div><div style="position:absolute;left:403px;top:567.6px;line-height:14px;font-size:10.8px;color:#222;font-weight:normal;white-space:nowrap;">11:00am</div><div style="position:absolute;left:403px;top:580.2px;line-height:14px;font-size:10.8px;color:#222;font-weight:normal;white-space:nowrap;">CMIS 260</div><div style="position:absolute;left:393px;top:600px;width:66px;height:18px;background:#C5E5F9"></div><div style="position:absolute;left:393px;top:600px;width:7px;height:18px;background:#9DC5EC"></div><div style="position:absolute;left:403px;top:600.5px;line-height:14px;font-size:10.8px;color:#222;font-weight:normal;white-space:nowrap;">12:30pm</div><div style="position:absolute;left:469px;top:372px;width:66px;height:18px;background:#C5E5F9"></div><div style="position:absolute;left:469px;top:372px;width:7px;height:18px;background:#9DC5EC"></div><div style="position:absolute;left:479px;top:372.5px;line-height:14px;font-size:10.8px;color:#222;font-weight:normal;white-space:nowrap;">7:30am ...</div><div style="position:absolute;left:469px;top:391px;width:66px;height:18px;background:#C5E5F9"></div><div style="position:absolute;left:469px;top:391px;width:7px;height:18px;background:#9DC5EC"></div><div style="position:absolute;left:479px;top:391.5px;line-height:14px;font-size:10.8px;color:#222;font-weight:normal;white-space:nowrap;">11:00am</div><div style="position:absolute;left:469px;top:410px;width:66px;height:18px;background:#C5E5F9"></div><div style="position:absolute;left:469px;top:410px;width:7px;height:18px;background:#9DC5EC"></div><div style="position:absolute;left:479px;top:410.5px;line-height:14px;font-size:10.8px;color:#222;font-weight:normal;white-space:nowrap;">12:30pm</div><div style="position:absolute;left:469px;top:470px;width:66px;height:18px;background:#C5E5F9"></div><div style="position:absolute;left:469px;top:470px;width:7px;height:18px;background:#9DC5EC"></div><div style="position:absolute;left:479px;top:470.5px;line-height:14px;font-size:10.8px;color:#222;font-weight:normal;white-space:nowrap;">7:30am ...</div><div style="position:absolute;left:469px;top:489px;width:66px;height:18px;background:#C5E5F9"></div><div style="position:absolute;left:469px;top:489px;width:7px;height:18px;background:#9DC5EC"></div><div style="position:absolute;left:479px;top:489.5px;line-height:14px;font-size:10.8px;color:#222;font-weight:normal;white-space:nowrap;">11:00am</div><div style="position:absolute;left:469px;top:508px;width:66px;height:18px;background:#C5E5F9"></div><div style="position:absolute;left:469px;top:508px;width:7px;height:18px;background:#9DC5EC"></div><div style="position:absolute;left:479px;top:508.5px;line-height:14px;font-size:10.8px;color:#222;font-weight:normal;white-space:nowrap;">12:30pm</div><div style="position:absolute;left:469px;top:568px;width:66px;height:31px;background:#C5E5F9"></div><div style="position:absolute;left:469px;top:568px;width:7px;height:31px;background:#9DC5EC"></div><div style="position:absolute;left:479px;top:567.6px;line-height:14px;font-size:10.8px;color:#222;font-weight:normal;white-space:nowrap;">11:00am</div><div style="position:absolute;left:479px;top:580.2px;line-height:14px;font-size:10.8px;color:#222;font-weight:normal;white-space:nowrap;">CMIS 260</div><div style="position:absolute;left:469px;top:600px;width:66px;height:18px;background:#C5E5F9"></div><div style="position:absolute;left:469px;top:600px;width:7px;height:18px;background:#9DC5EC"></div><div style="position:absolute;left:479px;top:600.5px;line-height:14px;font-size:10.8px;color:#222;font-weight:normal;white-space:nowrap;">12:30pm</div><div style="position:absolute;left:317px;top:666px;width:66px;height:31px;background:#C5E5F9"></div><div style="position:absolute;left:317px;top:666px;width:7px;height:31px;background:#9DC5EC"></div><div style="position:absolute;left:327px;top:665.6px;line-height:14px;font-size:10.8px;color:#222;font-weight:normal;white-space:nowrap;">7:30am</div><div style="position:absolute;left:327px;top:678.2px;line-height:14px;font-size:10.8px;color:#222;font-weight:normal;white-space:nowrap;">Niki Out...</div><div style="position:absolute;left:317px;top:698px;width:66px;height:18px;background:#C5E5F9"></div><div style="position:absolute;left:317px;top:698px;width:7px;height:18px;background:#9DC5EC"></div><div style="position:absolute;left:327px;top:698.5px;line-height:14px;font-size:10.8px;color:#222;font-weight:normal;white-space:nowrap;">12:30pm</div><div style="position:absolute;left:393px;top:666px;width:66px;height:31px;background:#C5E5F9"></div><div style="position:absolute;left:393px;top:666px;width:7px;height:31px;background:#9DC5EC"></div><div style="position:absolute;left:403px;top:665.6px;line-height:14px;font-size:10.8px;color:#222;font-weight:normal;white-space:nowrap;">11:00am</div><div style="position:absolute;left:403px;top:678.2px;line-height:14px;font-size:10.8px;color:#222;font-weight:normal;white-space:nowrap;">CMIS 260</div><div style="position:absolute;left:393px;top:698px;width:66px;height:18px;background:#C5E5F9"></div><div style="position:absolute;left:393px;top:698px;width:7px;height:18px;background:#9DC5EC"></div><div style="position:absolute;left:403px;top:698.5px;line-height:14px;font-size:10.8px;color:#222;font-weight:normal;white-space:nowrap;">12:30pm</div><div style="position:absolute;left:469px;top:666px;width:66px;height:18px;background:#C5E5F9"></div><div style="position:absolute;left:469px;top:666px;width:7px;height:18px;background:#9DC5EC"></div><div style="position:absolute;left:479px;top:666.5px;line-height:14px;font-size:10.8px;color:#222;font-weight:normal;white-space:nowrap;">9:30am ...</div><div style="position:absolute;left:469px;top:685px;width:66px;height:18px;background:#C5E5F9"></div><div style="position:absolute;left:469px;top:685px;width:7px;height:18px;background:#9DC5EC"></div><div style="position:absolute;left:479px;top:685.5px;line-height:14px;font-size:10.8px;color:#222;font-weight:normal;white-space:nowrap;">1:00pm .</div><div style="position:absolute;left:469px;top:704px;width:66px;height:18px;background:#C5E5F9"></div><div style="position:absolute;left:469px;top:704px;width:7px;height:18px;background:#9DC5EC"></div><div style="position:absolute;left:479px;top:704.5px;line-height:14px;font-size:10.8px;color:#222;font-weight:normal;white-space:nowrap;">1:00pm I...</div><div style="position:absolute;left:621px;top:666px;width:66px;height:31px;background:#C5E5F9"></div><div style="position:absolute;left:621px;top:666px;width:7px;height:31px;background:#9DC5EC"></div><div style="position:absolute;left:631px;top:665.6px;line-height:14px;font-size:10.8px;color:#222;font-weight:normal;white-space:nowrap;">10:00am</div><div style="position:absolute;left:631px;top:678.2px;line-height:14px;font-size:10.8px;color:#222;font-weight:normal;white-space:nowrap;">CMIS 260</div><div style="position:absolute;left:621px;top:698px;width:66px;height:18px;background:#C5E5F9"></div><div style="position:absolute;left:621px;top:698px;width:7px;height:18px;background:#9DC5EC"></div><div style="position:absolute;left:631px;top:698.5px;line-height:14px;font-size:10.8px;color:#222;font-weight:normal;white-space:nowrap;">1:00pm .</div><div style="position:absolute;left:1097px;top:568px;width:66px;height:44px;background:#B4E2B4"></div><div style="position:absolute;left:1097px;top:568px;width:7px;height:44px;background:#6DBF79"></div><div style="position:absolute;left:1107px;top:568.0px;line-height:14px;font-size:10.8px;color:#222;font-weight:normal;white-space:nowrap;">7:30am</div><div style="position:absolute;left:1107px;top:580.8px;line-height:14px;font-size:10.8px;color:#222;font-weight:normal;white-space:nowrap;">Can you</div><div style="position:absolute;left:1107px;top:593.6px;line-height:14px;font-size:10.8px;color:#222;font-weight:normal;white-space:nowrap;">edit me?</div><div style="position:absolute;left:1325px;top:219px;width:16px;height:514px;background:#F7F7F7"></div><svg style="position:absolute;left:1326px;top:221px;" width="14" height="14" viewBox="0 0 14 14"><rect x="0.5" y="0.5" width="13" height="13" fill="#fff" stroke="#BDBDBD"/><path d="M3.5 9 L7 5 L10.5 9 Z" fill="#666"/></svg><div style="position:absolute;left:1326px;top:459px;width:15px;height:22px;background:#fff;border:1px solid #BDBDBD;box-sizing:border-box"></div><svg style="position:absolute;left:1326px;top:717px;" width="14" height="14" viewBox="0 0 14 14"><rect x="0.5" y="0.5" width="13" height="13" fill="#fff" stroke="#BDBDBD"/><path d="M3.5 5 L7 9 L10.5 5 Z" fill="#666"/></svg><div style="position:absolute;left:476px;top:106px;width:390px;height:535px;background:#F0F0F0;border:1px solid #C4505A;box-sizing:border-box;box-shadow:4px 6px 16px rgba(0,0,0,0.30)"></div><div style="position:absolute;left:477px;top:107px;width:388px;height:30px;background:#FFFFFF"></div><div style="position:absolute;left:485.5px;top:115.3px;line-height:15px;font-size:11.8px;color:#111;font-weight:normal;white-space:nowrap;">Testing Properties</div><svg style="position:absolute;left:843px;top:115px;" width="14" height="14" viewBox="0 0 14 14"><path d="M1.5 1.5 L12.5 12.5 M12.5 1.5 L1.5 12.5" stroke="#222" stroke-width="1.1"/></svg><div style="position:absolute;left:484px;top:164px;width:373px;height:439px;background:#fff;border:1px solid #D9D9D9;box-sizing:border-box"></div><div style="position:absolute;left:485.5px;top:146.5px;width:52.0px;height:18.5px;background:#F0F0F0;border:1px solid #D9D9D9;box-sizing:border-box"></div><div style="position:absolute;left:451.0px;top:149.3px;width:120px;text-align:center;line-height:15px;font-size:11.4px;color:#1A1A1A;font-weight:normal;white-space:nowrap;">General</div><div style="position:absolute;left:536.5px;top:146.5px;width:71.0px;height:18.5px;background:#F0F0F0;border:1px solid #D9D9D9;box-sizing:border-box"></div><div style="position:absolute;left:511.5px;top:149.3px;width:120px;text-align:center;line-height:15px;font-size:11.4px;color:#1A1A1A;font-weight:normal;white-space:nowrap;">Home Page</div><div style="position:absolute;left:606.5px;top:146.5px;width:74.5px;height:18.5px;background:#F0F0F0;border:1px solid #D9D9D9;box-sizing:border-box"></div><div style="position:absolute;left:583.2px;top:149.3px;width:120px;text-align:center;line-height:15px;font-size:11.4px;color:#1A1A1A;font-weight:normal;white-space:nowrap;">AutoArchive</div><div style="position:absolute;left:754.5px;top:146.5px;width:92.0px;height:18.5px;background:#F0F0F0;border:1px solid #D9D9D9;box-sizing:border-box"></div><div style="position:absolute;left:740.0px;top:149.3px;width:120px;text-align:center;line-height:15px;font-size:11.4px;color:#1A1A1A;font-weight:normal;white-space:nowrap;">Synchronization</div><div style="position:absolute;left:680px;top:144.5px;width:75px;height:21px;background:#fff;border:1px solid #D9D9D9;border-bottom:none;box-sizing:border-box"></div><div style="position:absolute;left:657.0px;top:147.8px;width:120px;text-align:center;line-height:15px;font-size:11.4px;color:#1A1A1A;font-weight:normal;white-space:nowrap;">Permissions</div><div style="position:absolute;left:493px;top:173px;width:304px;height:104px;background:#fff;border:1px solid #828790;box-sizing:border-box"></div><div style="position:absolute;left:501.5px;top:180.3px;line-height:15px;font-size:11.4px;color:#1A1A1A;font-weight:normal;white-space:nowrap;">Name</div><div style="position:absolute;left:699px;top:176px;width:1px;height:23px;background:#E5E5E5"></div><div style="position:absolute;left:494px;top:174px;width:285px;height:85px;overflow:hidden"><div style="position:absolute;left:212.5px;top:5px;line-height:16px;font-size:11.4px;color:#1A1A1A;white-space:nowrap">Permission Level</div><div style="position:absolute;left:7.5px;top:26px;line-height:16px;font-size:11.4px;color:#1A1A1A;white-space:nowrap">Nelson, Wayne</div><div style="position:absolute;left:212.5px;top:26px;line-height:16px;font-size:11.4px;color:#1A1A1A;white-space:nowrap">Reviewer</div><div style="position:absolute;left:7.5px;top:43px;line-height:16px;font-size:11.4px;color:#1A1A1A;white-space:nowrap">Coons, Jonathan</div><div style="position:absolute;left:212.5px;top:43px;line-height:16px;font-size:11.4px;color:#1A1A1A;white-space:nowrap">Editor</div><div style="position:absolute;left:7.5px;top:60px;line-height:16px;font-size:11.4px;color:#1A1A1A;white-space:nowrap">Reany, Tori</div><div style="position:absolute;left:212.5px;top:60px;line-height:16px;font-size:11.4px;color:#1A1A1A;white-space:nowrap">Reviewer</div><div style="position:absolute;left:7.5px;top:77px;line-height:16px;font-size:11.4px;color:#1A1A1A;white-space:nowrap">Schmitz, Matthew</div><div style="position:absolute;left:212.5px;top:77px;line-height:16px;font-size:11.4px;color:#1A1A1A;white-space:nowrap">Reviewer</div></div><div style="position:absolute;left:779px;top:174px;width:17px;height:85px;background:#F0F0F0"></div><div style="position:absolute;left:779px;top:203px;width:16px;height:17px;background:#CDCDCD"></div><svg style="position:absolute;left:781px;top:179px;" width="12" height="10" viewBox="0 0 12 10"><path d="M2 7 L6 3 L10 7" fill="none" stroke="#606060" stroke-width="1.6"/></svg><svg style="position:absolute;left:781px;top:244px;" width="12" height="10" viewBox="0 0 12 10"><path d="M2 3 L6 7 L10 3" fill="none" stroke="#606060" stroke-width="1.6"/></svg><div style="position:absolute;left:494px;top:259px;width:302px;height:17px;background:#F0F0F0"></div><div style="position:absolute;left:512px;top:259px;width:220px;height:16px;background:#CDCDCD"></div><svg style="position:absolute;left:498px;top:261px;" width="10" height="12" viewBox="0 0 10 12"><path d="M7 2 L3 6 L7 10" fill="none" stroke="#606060" stroke-width="1.6"/></svg><svg style="position:absolute;left:765px;top:261px;" width="10" height="12" viewBox="0 0 10 12"><path d="M3 2 L7 6 L3 10" fill="none" stroke="#606060" stroke-width="1.6"/></svg><div style="position:absolute;left:543px;top:281px;width:77px;height:21px;background:#E1E1E1;border:1px solid #ADADAD;box-sizing:border-box"></div><div style="position:absolute;left:531.5px;top:284.8px;width:100px;text-align:center;line-height:15px;font-size:11.4px;color:#1A1A1A;font-weight:normal;white-space:nowrap;">Add...</div><div style="position:absolute;left:631px;top:281px;width:77px;height:21px;background:#E1E1E1;border:1px solid #ADADAD;box-sizing:border-box"></div><div style="position:absolute;left:619.5px;top:284.8px;width:100px;text-align:center;line-height:15px;font-size:11.4px;color:#1A1A1A;font-weight:normal;white-space:nowrap;">Remove</div><div style="position:absolute;left:719px;top:281px;width:77px;height:21px;background:#CCCCCC;border:1px solid #BFBFBF;box-sizing:border-box"></div><div style="position:absolute;left:707.5px;top:284.8px;width:100px;text-align:center;line-height:15px;font-size:11.4px;color:#838383;font-weight:normal;white-space:nowrap;">Properties...</div><div style="position:absolute;left:493px;top:312px;width:304px;height:228px;border:1px solid #DCDCDC;box-sizing:border-box"></div><div style="position:absolute;left:499px;top:304.8px;height:16px;line-height:16px;padding:0 3px;background:#fff;font-size:11.4px;color:#1A1A1A;white-space:nowrap">Permissions</div><div style="position:absolute;left:502px;top:329.8px;line-height:15px;font-size:11.4px;color:#1A1A1A;font-weight:normal;white-space:nowrap;">Permission Level:</div><div style="position:absolute;left:597px;top:326px;width:191px;height:21px;background:#E1E1E1;border:1px solid #ADADAD;box-sizing:border-box"></div><div style="position:absolute;left:601.5px;top:329.8px;line-height:15px;font-size:11.4px;color:#1A1A1A;font-weight:normal;white-space:nowrap;">None</div><svg style="position:absolute;left:773px;top:332px;" width="12" height="8" viewBox="0 0 12 8"><path d="M1.5 1.5 L6 6 L10.5 1.5" fill="none" stroke="#333" stroke-width="1.1"/></svg><div style="position:absolute;left:502px;top:356px;width:139px;height:93px;border:1px solid #DCDCDC;box-sizing:border-box"></div><div style="position:absolute;left:508px;top:348.8px;height:16px;line-height:16px;padding:0 3px;background:#fff;font-size:11.4px;color:#1A1A1A;white-space:nowrap">Read</div><div style="position:absolute;left:650px;top:356px;width:138px;height:93px;border:1px solid #DCDCDC;box-sizing:border-box"></div><div style="position:absolute;left:656px;top:348.8px;height:16px;line-height:16px;padding:0 3px;background:#fff;font-size:11.4px;color:#1A1A1A;white-space:nowrap">Write</div><div style="position:absolute;left:502px;top:459px;width:139px;height:74px;border:1px solid #DCDCDC;box-sizing:border-box"></div><div style="position:absolute;left:508px;top:451.8px;height:16px;line-height:16px;padding:0 3px;background:#fff;font-size:11.4px;color:#1A1A1A;white-space:nowrap">Delete items</div><div style="position:absolute;left:650px;top:459px;width:138px;height:74px;border:1px solid #DCDCDC;box-sizing:border-box"></div><div style="position:absolute;left:656px;top:451.8px;height:16px;line-height:16px;padding:0 3px;background:#fff;font-size:11.4px;color:#1A1A1A;white-space:nowrap">Other</div><svg style="position:absolute;left:511.0px;top:371.0px;" width="13" height="13" viewBox="0 0 13 13"><circle cx="6.5" cy="6.5" r="6" fill="#fff" stroke="#333" stroke-width="1"/><circle cx="6.5" cy="6.5" r="3.5" fill="#333"/></svg><div style="position:absolute;left:527.5px;top:370.8px;line-height:15px;font-size:11.4px;color:#1A1A1A;font-weight:normal;white-space:nowrap;">None</div><svg style="position:absolute;left:511.0px;top:390.0px;" width="13" height="13" viewBox="0 0 13 13"><circle cx="6.5" cy="6.5" r="6" fill="#fff" stroke="#333" stroke-width="1"/></svg><div style="position:absolute;left:527.5px;top:389.8px;line-height:15px;font-size:11.4px;color:#1A1A1A;font-weight:normal;white-space:nowrap;">Full Details</div><svg style="position:absolute;left:659px;top:371.0px;" width="13" height="13" viewBox="0 0 13 13"><rect x="0.5" y="0.5" width="12" height="12" fill="#fff" stroke="#333"/></svg><div style="position:absolute;left:675.5px;top:370.8px;line-height:15px;font-size:11.4px;color:#1A1A1A;font-weight:normal;white-space:nowrap;">Create items</div><svg style="position:absolute;left:659px;top:390.0px;" width="13" height="13" viewBox="0 0 13 13"><rect x="0.5" y="0.5" width="12" height="12" fill="#fff" stroke="#333"/></svg><div style="position:absolute;left:675.5px;top:389.8px;line-height:15px;font-size:11.4px;color:#1A1A1A;font-weight:normal;white-space:nowrap;">Create subfolders</div><svg style="position:absolute;left:659px;top:409.0px;" width="13" height="13" viewBox="0 0 13 13"><rect x="0.5" y="0.5" width="12" height="12" fill="#fff" stroke="#333"/></svg><div style="position:absolute;left:675.5px;top:408.8px;line-height:15px;font-size:11.4px;color:#1A1A1A;font-weight:normal;white-space:nowrap;">Edit own</div><svg style="position:absolute;left:659px;top:428.0px;" width="13" height="13" viewBox="0 0 13 13"><rect x="0.5" y="0.5" width="12" height="12" fill="#fff" stroke="#333"/></svg><div style="position:absolute;left:675.5px;top:427.8px;line-height:15px;font-size:11.4px;color:#1A1A1A;font-weight:normal;white-space:nowrap;">Edit all</div><svg style="position:absolute;left:511.0px;top:474.0px;" width="13" height="13" viewBox="0 0 13 13"><circle cx="6.5" cy="6.5" r="6" fill="#fff" stroke="#333" stroke-width="1"/><circle cx="6.5" cy="6.5" r="3.5" fill="#333"/></svg><div style="position:absolute;left:527.5px;top:473.8px;line-height:15px;font-size:11.4px;color:#1A1A1A;font-weight:normal;white-space:nowrap;">None</div><svg style="position:absolute;left:511.0px;top:493.0px;" width="13" height="13" viewBox="0 0 13 13"><circle cx="6.5" cy="6.5" r="6" fill="#fff" stroke="#333" stroke-width="1"/></svg><div style="position:absolute;left:527.5px;top:492.8px;line-height:15px;font-size:11.4px;color:#1A1A1A;font-weight:normal;white-space:nowrap;">Own</div><svg style="position:absolute;left:511.0px;top:512.0px;" width="13" height="13" viewBox="0 0 13 13"><circle cx="6.5" cy="6.5" r="6" fill="#fff" stroke="#333" stroke-width="1"/></svg><div style="position:absolute;left:527.5px;top:511.8px;line-height:15px;font-size:11.4px;color:#1A1A1A;font-weight:normal;white-space:nowrap;">All</div><svg style="position:absolute;left:659px;top:474.0px;" width="13" height="13" viewBox="0 0 13 13"><rect x="0.5" y="0.5" width="12" height="12" fill="#fff" stroke="#333"/></svg><div style="position:absolute;left:675.5px;top:473.8px;line-height:15px;font-size:11.4px;color:#1A1A1A;font-weight:normal;white-space:nowrap;">Folder owner</div><svg style="position:absolute;left:659px;top:493.0px;" width="13" height="13" viewBox="0 0 13 13"><rect x="0.5" y="0.5" width="12" height="12" fill="#fff" stroke="#CCCCCC"/></svg><div style="position:absolute;left:675.5px;top:492.8px;line-height:15px;font-size:11.4px;color:#838383;font-weight:normal;white-space:nowrap;">Folder contact</div><svg style="position:absolute;left:659px;top:512.0px;" width="13" height="13" viewBox="0 0 13 13"><rect x="0.5" y="0.5" width="12" height="12" fill="#fff" stroke="#333"/><path d="M2.5 6.5 L5 9.5 L10.5 3" fill="none" stroke="#333" stroke-width="1.2"/></svg><div style="position:absolute;left:675.5px;top:511.8px;line-height:15px;font-size:11.4px;color:#1A1A1A;font-weight:normal;white-space:nowrap;">Folder visible</div><div style="position:absolute;left:623px;top:611px;width:73px;height:21px;background:#E1E1E1;border:2px solid #0078D7;box-sizing:border-box"></div><div style="position:absolute;left:609.5px;top:614.8px;width:100px;text-align:center;line-height:15px;font-size:11.4px;color:#1A1A1A;font-weight:normal;white-space:nowrap;">OK</div><div style="position:absolute;left:704px;top:611px;width:73px;height:21px;background:#E1E1E1;border:1px solid #ADADAD;box-sizing:border-box"></div><div style="position:absolute;left:690.5px;top:614.8px;width:100px;text-align:center;line-height:15px;font-size:11.4px;color:#1A1A1A;font-weight:normal;white-space:nowrap;">Cancel</div><div style="position:absolute;left:785px;top:611px;width:73px;height:21px;background:#CCCCCC;border:1px solid #BFBFBF;box-sizing:border-box"></div><div style="position:absolute;left:771.5px;top:614.8px;width:100px;text-align:center;line-height:15px;font-size:11.4px;color:#838383;font-weight:normal;white-space:nowrap;">Apply</div>
</body></html>
